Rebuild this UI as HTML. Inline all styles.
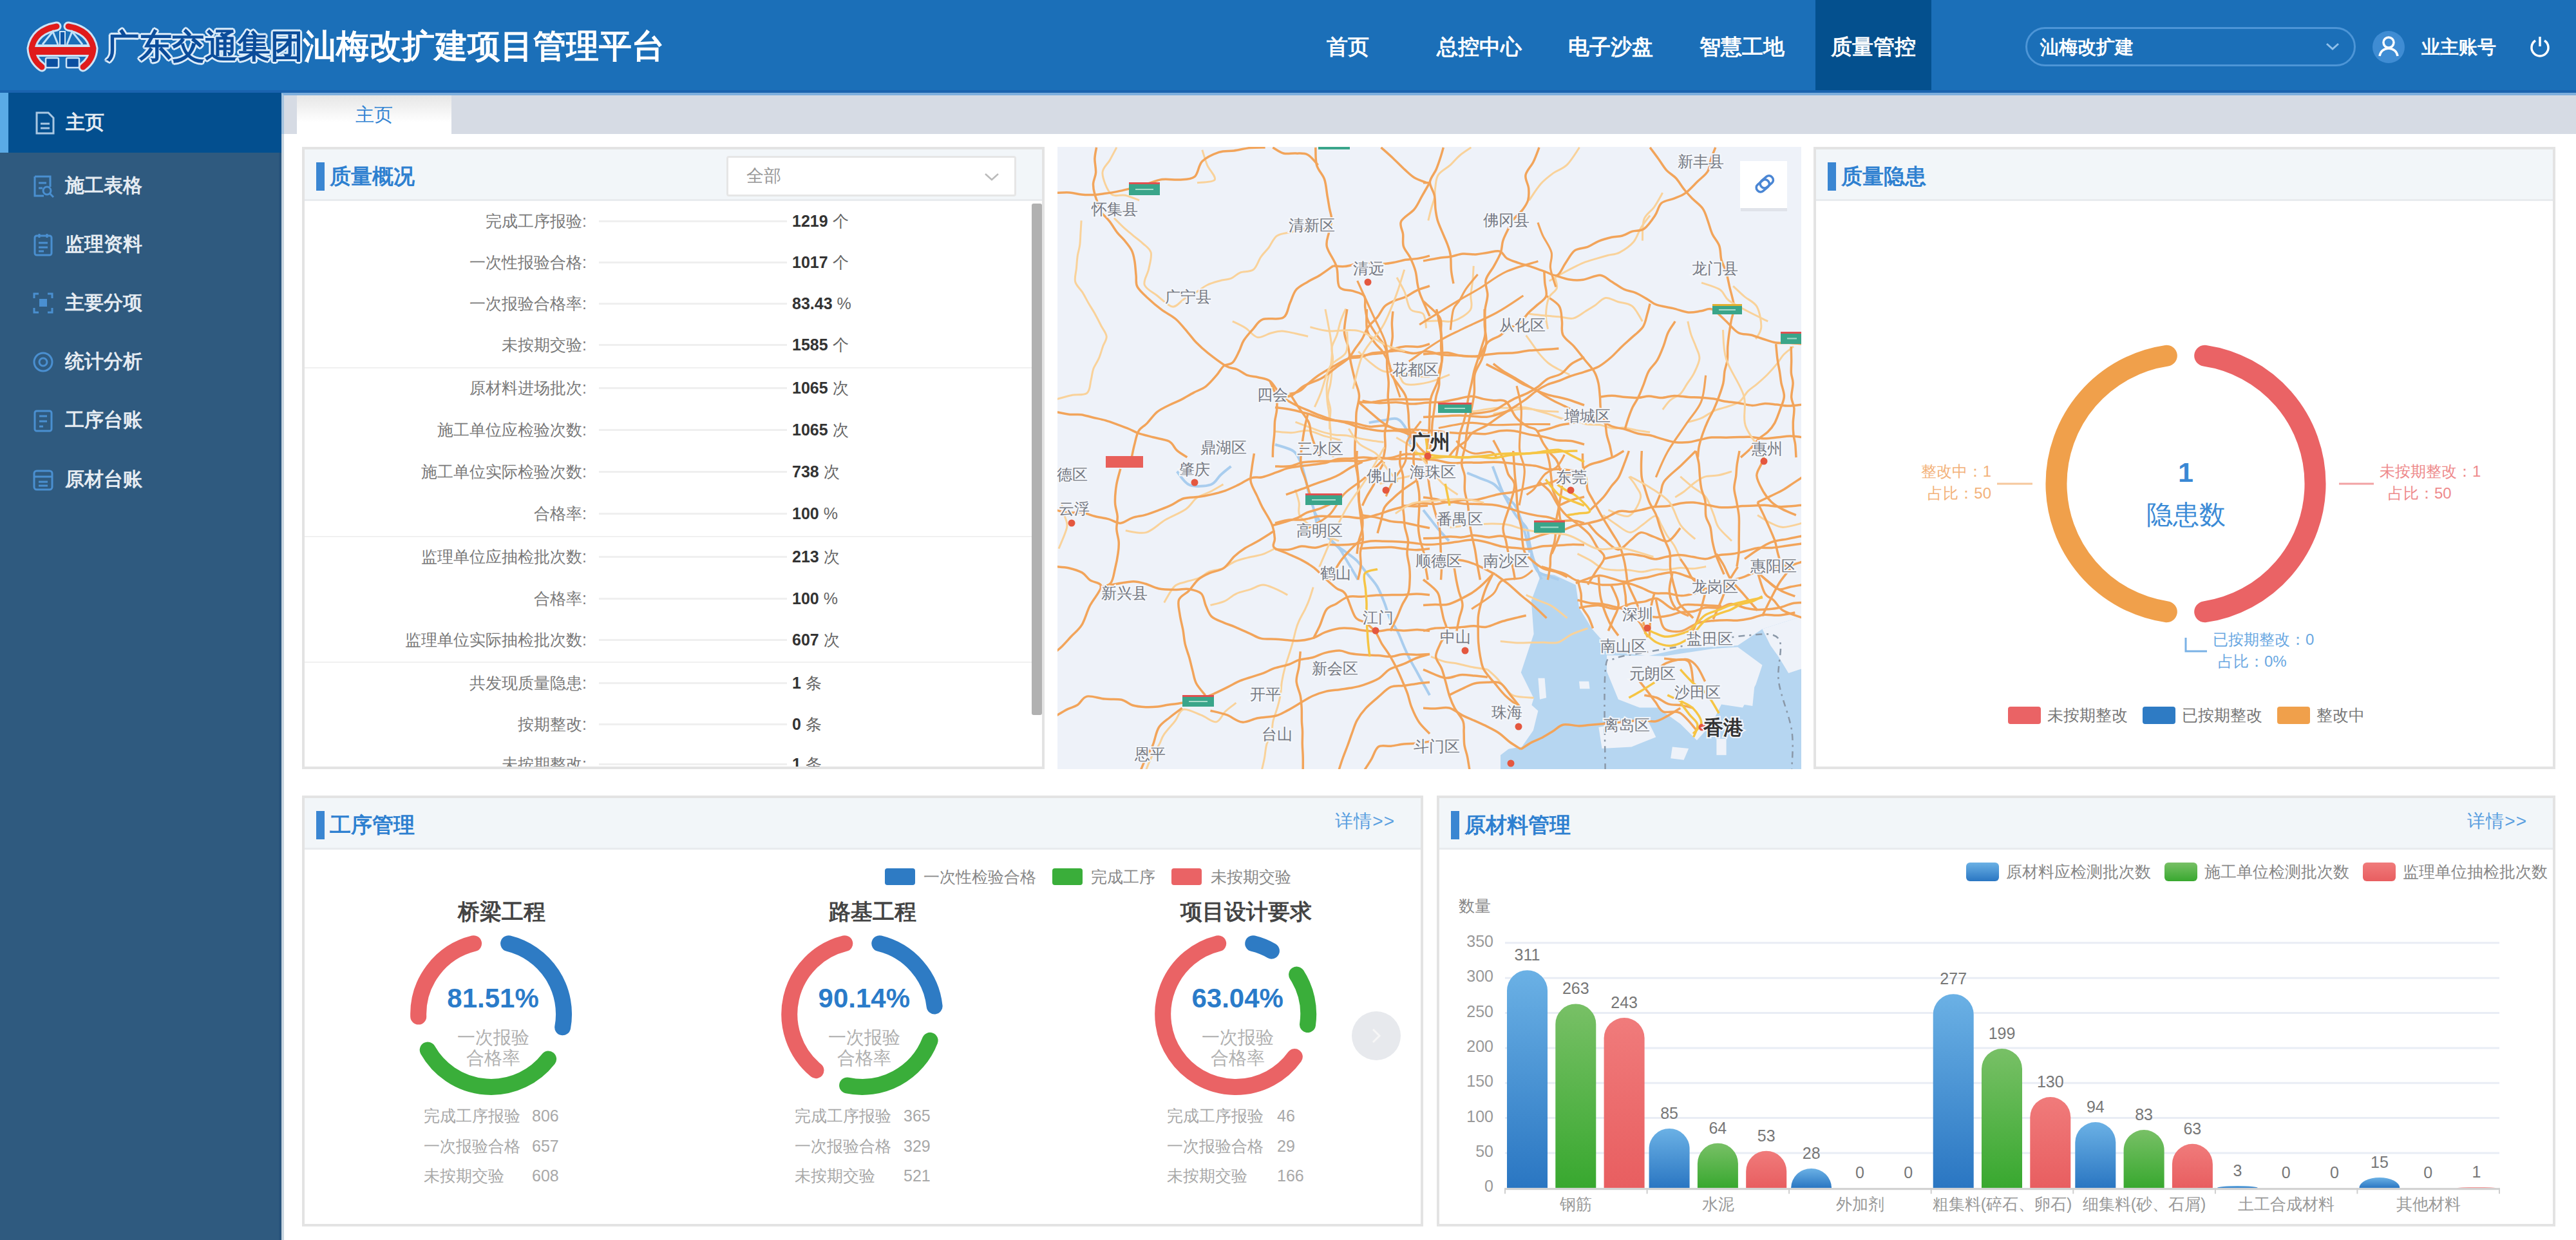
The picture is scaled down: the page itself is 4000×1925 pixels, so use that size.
<!DOCTYPE html>
<html><head><meta charset="utf-8">
<style>
*{box-sizing:border-box;margin:0;padding:0}
html,body{width:4000px;height:1925px;overflow:hidden;background:#fff;font-family:"Liberation Sans",sans-serif}
.a{position:absolute}
#hdr{left:0;top:0;width:4000px;height:144px;background:#1b6fb8;border-bottom:4px solid #1a63ae}
.nav{top:0;height:140px;line-height:146px;color:#fff;font-size:33px;font-weight:bold;text-align:center;white-space:nowrap}
#side{left:0;top:144px;width:437px;height:1781px;background:#2f5a7f;border-right:4px solid #28537b}
.si{left:0;width:433px;height:92px;color:#e6ecf2;font-size:30px;line-height:92px;white-space:nowrap;font-weight:bold}
.si .t{position:absolute;left:101px;top:0}
.si svg{position:absolute;left:50px;top:28px}
#tabbar{left:437px;top:144px;width:3563px;height:64px;background:#d6dbe4;border-top:4px solid #7eaedc;border-left:4px solid #a6c3de}
.panel{border:4px solid #e3e3e3;background:#fff;overflow:hidden}
.ph{position:absolute;left:0;top:0;right:0;height:80px;background:#f2f6f9;border-bottom:3px solid #e8ebee}
.pt{position:absolute;left:18px;top:20px;height:44px;border-left:13px solid #3a86d2;padding-left:8px;color:#2e80d0;font-size:33px;font-weight:bold;line-height:44px;white-space:nowrap}
.more{position:absolute;right:40px;top:14px;color:#5a9fe0;font-size:28px;line-height:44px;letter-spacing:1px}
.row{position:absolute;left:0;width:1100px;height:40px;font-size:25px;line-height:40px;white-space:nowrap}
.row .l{position:absolute;right:662px;color:#7a7a7a;text-align:right;font-size:25px}
.row .d{position:absolute;left:457px;width:292px;top:19px;border-top:3px solid #efefef}
.row .v{position:absolute;left:757px;color:#333;font-weight:bold;font-size:25px}.row .v i{font-style:normal;font-weight:normal;color:#666}
.sep{position:absolute;left:0;width:1130px;border-top:2px solid #f0f0f0}
</style></head>
<body>
<!-- HEADER -->
<div id="hdr" class="a">
  <svg class="a" style="left:38px;top:33px" width="118" height="80" viewBox="0 0 118 80">
    <path d="M50 8 Q16 14 11 42 Q12 60 27 71 M68 8 Q102 14 107 42 Q106 60 91 71" fill="none" stroke="#cde4f7" stroke-width="15" stroke-linecap="round"/>
    <rect x="6" y="36" width="106" height="19" rx="5" fill="#cde4f7"/>
    <path d="M50 8 Q16 14 11 42 Q12 60 27 71 M68 8 Q102 14 107 42 Q106 60 91 71" fill="none" stroke="#e01b1b" stroke-width="9" stroke-linecap="round"/>
    <rect x="10" y="40" width="98" height="12" fill="#e01b1b"/>
    <path d="M28 36 L44 16 L52 36 M66 36 L74 16 L90 36" fill="none" stroke="#bfe0f8" stroke-width="3"/>
    <rect x="54" y="15" width="10" height="21" fill="#cfe3f4"/>
    <rect x="56" y="17" width="6" height="19" fill="#0c56a8"/>
    <rect x="33" y="57" width="20" height="15" rx="2" fill="#0a4fa0" stroke="#cde4f7" stroke-width="2.5"/>
    <rect x="65" y="57" width="20" height="15" rx="2" fill="#0a4fa0" stroke="#cde4f7" stroke-width="2.5"/>
  </svg>
  <div class="a" style="left:165px;top:40px;font-size:51px;font-weight:bold;line-height:64px;white-space:nowrap;letter-spacing:0px"><span style="color:#0b4c9a;text-shadow:3px 0 #dcecf9,-3px 0 #dcecf9,0 3px #dcecf9,0 -3px #dcecf9,2px 2px #dcecf9,-2px -2px #dcecf9,2px -2px #dcecf9,-2px 2px #dcecf9">广东交通集团</span><span style="color:#fff">汕梅改扩建项目管理平台</span></div>
  <div class="a nav" style="left:1991px;width:204px">首页</div>
  <div class="a nav" style="left:2195px;width:204px">总控中心</div>
  <div class="a nav" style="left:2399px;width:204px">电子沙盘</div>
  <div class="a nav" style="left:2603px;width:204px">智慧工地</div>
  <div class="a" style="left:2819px;top:0;width:180px;height:140px;background:#04508e"></div>
  <div class="a nav" style="left:2807px;width:204px">质量管控</div>
  <div class="a" style="left:3145px;top:42px;width:513px;height:61px;border:3px solid #4d95d6;border-radius:31px"></div>
  <div class="a" style="left:3168px;top:52px;color:#fff;font-size:29px;line-height:42px;font-weight:bold">汕梅改扩建</div>
  <svg class="a" style="left:3610px;top:64px" width="24" height="16" viewBox="0 0 24 16"><path d="M3 4 L12 12 L21 4" fill="none" stroke="#8fc0ea" stroke-width="3"/></svg>
  <svg class="a" style="left:3683px;top:47px" width="52" height="52" viewBox="0 0 52 52">
    <circle cx="26" cy="26" r="25" fill="#3f8cd3"/>
    <circle cx="26" cy="19" r="8" fill="none" stroke="#fff" stroke-width="3.5"/>
    <path d="M12 40 Q14 29 26 28 Q38 29 40 40" fill="none" stroke="#fff" stroke-width="3.5"/>
  </svg>
  <div class="a" style="left:3760px;top:52px;color:#fff;font-size:29px;line-height:42px;font-weight:bold">业主账号</div>
  <svg class="a" style="left:3925px;top:54px" width="38" height="38" viewBox="0 0 38 38">
    <path d="M12 9 A13 13 0 1 0 26 9" fill="none" stroke="#fff" stroke-width="3.5"/>
    <line x1="19" y1="3" x2="19" y2="18" stroke="#fff" stroke-width="3.5"/>
  </svg>
</div>

<!-- SIDEBAR -->
<div id="side" class="a">
  <div class="a si" style="top:0;width:437px;background:#034f8f;height:93px;border-left:13px solid #5aaae6">
    <svg width="34" height="38" viewBox="0 0 34 38" style="left:40px"><path d="M4 3 H22 L30 11 V35 H4 Z" fill="none" stroke="#a9c7e2" stroke-width="3"/><line x1="10" y1="20" x2="24" y2="20" stroke="#a9c7e2" stroke-width="3"/><line x1="10" y1="27" x2="24" y2="27" stroke="#a9c7e2" stroke-width="3"/></svg>
    <span class="t" style="left:89px">主页</span>
  </div>
  <div class="a si" style="top:98px"><svg width="34" height="38" viewBox="0 0 34 38"><path d="M4 4 H28 V20 M4 4 V34 H18" fill="none" stroke="#4a8fd0" stroke-width="3"/><path d="M10 14 H22 M10 22 H16" stroke="#4a8fd0" stroke-width="3"/><circle cx="23" cy="26" r="6" fill="none" stroke="#4a8fd0" stroke-width="3"/><path d="M27 30 L33 36" stroke="#4a8fd0" stroke-width="3"/></svg><span class="t">施工表格</span></div>
  <div class="a si" style="top:189px"><svg width="34" height="38" viewBox="0 0 34 38"><rect x="4" y="5" width="26" height="30" rx="3" fill="none" stroke="#4a8fd0" stroke-width="3"/><path d="M11 2 V8 M23 2 V8 M10 16 H24 M10 23 H24 M10 29 H18" stroke="#4a8fd0" stroke-width="3"/></svg><span class="t">监理资料</span></div>
  <div class="a si" style="top:280px"><svg width="34" height="38" viewBox="0 0 34 38"><path d="M3 11 V4 H10 M24 4 H31 V11 M31 26 V33 H24 M10 33 H3 V26" fill="none" stroke="#4a8fd0" stroke-width="3"/><rect x="11" y="12" width="12" height="12" fill="#4a8fd0"/></svg><span class="t">主要分项</span></div>
  <div class="a si" style="top:371px"><svg width="34" height="38" viewBox="0 0 34 38"><circle cx="17" cy="19" r="14" fill="none" stroke="#4a8fd0" stroke-width="3"/><circle cx="17" cy="19" r="6" fill="none" stroke="#4a8fd0" stroke-width="3"/></svg><span class="t">统计分析</span></div>
  <div class="a si" style="top:462px"><svg width="34" height="38" viewBox="0 0 34 38"><rect x="4" y="4" width="26" height="31" rx="3" fill="none" stroke="#4a8fd0" stroke-width="3"/><path d="M11 12 H23 M11 20 H23 M11 28 H17" stroke="#4a8fd0" stroke-width="3"/></svg><span class="t">工序台账</span></div>
  <div class="a si" style="top:554px"><svg width="34" height="38" viewBox="0 0 34 38"><rect x="3" y="5" width="28" height="29" rx="4" fill="none" stroke="#4a8fd0" stroke-width="3"/><path d="M3 14 H31 M10 22 H24 M10 28 H24" stroke="#4a8fd0" stroke-width="3"/></svg><span class="t">原材台账</span></div>
</div>

<div class="a" style="left:437px;top:144px;width:4px;height:1781px;background:#c8d5e0"></div>
<!-- TAB BAR -->
<div id="tabbar" class="a">
  <div class="a" style="left:20px;top:0;width:240px;height:60px;background:linear-gradient(#e6e6e6,#fff 70%);color:#3585d3;font-size:29px;line-height:60px;text-align:center">主页</div>
</div>

<!-- PANEL 1 -->
<div class="a panel" style="left:469px;top:228px;width:1153px;height:966px">
  <div class="ph"><div class="pt">质量概况</div>
    <div class="a" style="left:655px;top:10px;width:450px;height:63px;background:#fff;border:3px solid #e6e6e6;border-radius:4px;color:#999;font-size:27px;line-height:57px;padding-left:28px">全部</div>
    <svg class="a" style="left:1055px;top:36px" width="24" height="14" viewBox="0 0 24 14"><path d="M2 2 L12 11 L22 2" fill="none" stroke="#bbb" stroke-width="2.5"/></svg>
  </div>
  <div class="row" style="top:91px"><span class="l">完成工序报验:</span><span class="d"></span><span class="v">1219 <i>个</i></span></div>
  <div class="row" style="top:155px"><span class="l">一次性报验合格:</span><span class="d"></span><span class="v">1017 <i>个</i></span></div>
  <div class="row" style="top:219px"><span class="l">一次报验合格率:</span><span class="d"></span><span class="v">83.43 <i>%</i></span></div>
  <div class="row" style="top:283px"><span class="l">未按期交验:</span><span class="d"></span><span class="v">1585 <i>个</i></span></div>
  <div class="row" style="top:350px"><span class="l">原材料进场批次:</span><span class="d"></span><span class="v">1065 <i>次</i></span></div>
  <div class="row" style="top:415px"><span class="l">施工单位应检验次数:</span><span class="d"></span><span class="v">1065 <i>次</i></span></div>
  <div class="row" style="top:480px"><span class="l">施工单位实际检验次数:</span><span class="d"></span><span class="v">738 <i>次</i></span></div>
  <div class="row" style="top:545px"><span class="l">合格率:</span><span class="d"></span><span class="v">100 <i>%</i></span></div>
  <div class="row" style="top:612px"><span class="l">监理单位应抽检批次数:</span><span class="d"></span><span class="v">213 <i>次</i></span></div>
  <div class="row" style="top:677px"><span class="l">合格率:</span><span class="d"></span><span class="v">100 <i>%</i></span></div>
  <div class="row" style="top:741px"><span class="l">监理单位实际抽检批次数:</span><span class="d"></span><span class="v">607 <i>次</i></span></div>
  <div class="row" style="top:808px"><span class="l">共发现质量隐患:</span><span class="d"></span><span class="v">1 <i>条</i></span></div>
  <div class="row" style="top:872px"><span class="l">按期整改:</span><span class="d"></span><span class="v">0 <i>条</i></span></div>
  <div class="row" style="top:934px"><span class="l">未按期整改:</span><span class="d"></span><span class="v">1 <i>条</i></span></div>
  <div class="sep" style="top:338px"></div>
  <div class="sep" style="top:600px"></div>
  <div class="sep" style="top:795px"></div>
  <div class="a" style="left:1129px;top:84px;width:16px;height:794px;background:#b1b1b1;border-radius:3px"></div>
</div>

<!-- PANEL 2: map -->
<div id="map" class="a" style="left:1642px;top:228px;width:1155px;height:966px;background:#eef2f9;overflow:hidden"></div>

<!-- PANEL 3 -->
<div class="a panel" style="left:2816px;top:228px;width:1152px;height:966px">
  <div class="ph"><div class="pt">质量隐患</div></div>
</div>

<!-- PANEL 4 -->
<div class="a panel" style="left:469px;top:1235px;width:1741px;height:669px">
  <div class="ph"><div class="pt">工序管理</div><div class="more">详情&gt;&gt;</div></div>
</div>

<!-- PANEL 5 -->
<div class="a panel" style="left:2231px;top:1235px;width:1737px;height:669px">
  <div class="ph"><div class="pt">原材料管理</div><div class="more">详情&gt;&gt;</div></div>
</div>

<svg class="a" style="left:1642px;top:228px" width="1155" height="966" viewBox="1642 228 1155 966" font-family="Liberation Sans, sans-serif"><rect x="1642" y="228" width="1155" height="966" fill="#eef2f9"/><path d="M2393.5 890.2 L2413.8 892.7 L2446.9 907.9 L2452.0 943.5 L2472.3 976.5 L2492.6 999.4 L2507.8 1012.1 L2558.7 1018.5 L2609.5 1007.0 L2698.4 1002.0 L2736.5 976.5 L2800.0 956.2 L2800.0 1195.0 L2330.0 1195.0 L2330.0 1172.2 L2361.8 1148.0 L2381.6 1084.0 L2361.8 1043.9 L2381.6 984.2 L2377.8 932.6 Z" fill="#b6d6f1"/><path d="M2495.1 1017.2 L2584.1 1018.5 L2660.3 1007.0 L2698.4 1004.5 L2736.5 1032.4 L2726.3 1062.9 L2706.0 1098.5 L2673.0 1093.4 L2657.7 1123.9 L2634.9 1149.3 L2609.5 1123.9 L2573.9 1098.5 L2546.0 1098.5 L2512.9 1085.8 L2495.1 1042.6 Z" fill="#eef2f9"/><path d="M2482.4 1129.0 L2523.1 1121.4 L2558.7 1118.8 L2571.4 1144.2 L2533.3 1159.5 L2487.5 1162.0 Z" fill="#eef2f9"/><path d="M2330.0 1083.3 L2365.6 1083.3 L2388.4 1103.6 L2380.8 1134.1 L2363.0 1159.5 L2330.0 1164.6 Z" fill="#eef2f9"/><path d="M2736.5 976.5 L2800.0 956.2 L2800.0 1037.5 L2777.2 1045.1 L2761.9 1019.7 L2749.2 1002.0 Z" fill="#eef2f9"/><path d="M2452.0 1057.8 L2467.2 1057.8 L2468.5 1069.3 L2453.2 1069.3 Z" fill="#eef2f9"/><path d="M2388.4 1052.8 L2398.6 1052.8 L2401.1 1083.3 L2391.0 1085.8 Z" fill="#eef2f9"/><path d="M2665.4 1146.8 L2680.6 1146.8 L2680.6 1172.2 L2665.4 1172.2 Z" fill="#eef2f9"/><path d="M2685.7 1045.1 L2726.3 1045.1 L2721.3 1096.0 L2690.8 1090.9 Z" fill="#eef2f9"/><path d="M2596.8 1159.5 L2622.2 1162.0 L2614.6 1179.8 L2594.2 1177.3 Z" fill="#eef2f9"/><path d="M2492.6 1195.0 C2492.6 1169.6 2490.1 1071.4 2492.6 1042.6 C2495.1 1013.8 2496.8 1027.4 2507.8 1022.3 C2518.9 1017.2 2537.5 1015.9 2558.7 1012.1 C2579.8 1008.3 2609.5 1003.6 2634.9 999.4 C2660.3 995.2 2689.9 988.0 2711.1 986.7 C2732.3 985.4 2753.4 979.9 2761.9 991.8 C2770.4 1003.6 2758.5 1034.1 2761.9 1057.8 C2765.3 1081.6 2778.8 1111.2 2782.2 1134.1 C2785.6 1156.9 2782.2 1184.9 2782.2 1195.0" fill="none" stroke="#8a98a8" stroke-width="2.5" stroke-dasharray="10 7 3 7"/><path d="M2039.2 791.8 C2040.8 794.5 2045.4 802.5 2048.7 808.1 C2052.0 813.7 2055.5 819.7 2059.1 825.5 C2062.8 831.4 2065.5 837.9 2070.6 843.1 C2075.7 848.4 2083.8 852.5 2089.9 857.1 C2096.0 861.6 2101.6 865.2 2107.1 870.7 C2112.5 876.2 2117.4 883.6 2122.6 890.2 C2127.8 896.7 2133.7 902.5 2138.3 910.1 C2142.8 917.7 2146.4 927.5 2149.7 935.7 C2153.0 943.9 2154.6 952.0 2158.0 959.4 C2161.5 966.8 2166.6 973.0 2170.2 980.3 C2173.9 987.6 2176.7 996.0 2179.9 1003.2 C2183.0 1010.4 2186.0 1017.0 2189.2 1023.4 C2192.4 1029.7 2195.6 1034.9 2199.2 1041.3 C2202.7 1047.7 2206.8 1055.4 2210.3 1061.7 C2213.8 1068.0 2218.4 1076.3 2220.0 1079.2" fill="none" stroke="#a9cdee" stroke-width="4"/><path d="M1827.6 731.9 C1830.9 735.4 1838.4 749.5 1847.1 752.9 C1855.9 756.3 1872.1 754.9 1880.1 752.3 C1888.2 749.7 1890.0 742.2 1895.2 737.5 C1900.4 732.7 1908.7 726.2 1911.5 724.0" fill="none" stroke="#a9cdee" stroke-width="4"/><path d="M2317.8 724.0 C2318.9 726.9 2322.0 735.1 2324.4 741.5 C2326.9 747.8 2329.7 755.7 2332.5 761.9 C2335.2 768.2 2337.3 772.3 2341.0 778.8 C2344.7 785.3 2349.5 793.9 2354.5 800.8 C2359.4 807.7 2367.4 813.3 2370.8 820.3 C2374.2 827.3 2373.3 835.1 2375.0 842.9 C2376.7 850.8 2377.9 858.1 2381.0 867.5 C2384.1 877.0 2391.5 894.3 2393.6 899.6" fill="none" stroke="#a9cdee" stroke-width="4"/><path d="M2210.0 791.8 C2211.8 794.1 2217.1 800.7 2220.9 805.6 C2224.8 810.5 2228.4 815.5 2233.2 821.1 C2238.1 826.8 2247.1 836.6 2249.9 839.7" fill="none" stroke="#a9cdee" stroke-width="4"/><path d="M1980.0 690.0 C1984.8 691.7 2001.9 695.6 2008.5 700.3 C2015.2 705.1 2016.8 711.6 2019.9 718.5 C2022.9 725.5 2024.7 733.9 2026.9 742.1 C2029.0 750.3 2030.4 759.0 2032.7 767.6 C2035.0 776.1 2038.5 784.8 2040.9 793.4 C2043.3 801.9 2043.1 811.8 2046.9 818.8 C2050.6 825.7 2057.6 829.4 2063.2 835.0 C2068.8 840.6 2076.0 847.0 2080.4 852.3 C2084.7 857.7 2086.2 861.8 2089.3 867.0 C2092.4 872.2 2095.9 877.9 2099.1 883.4 C2102.3 889.0 2107.1 897.3 2108.7 900.1" fill="none" stroke="#a9cdee" stroke-width="4"/><path d="M2278.1 734.1 C2281.5 735.5 2291.8 739.7 2298.7 742.6 C2305.6 745.5 2313.2 747.1 2319.5 751.5 C2325.8 755.9 2330.9 763.6 2336.3 769.1 C2341.8 774.6 2347.9 777.7 2352.3 784.4 C2356.7 791.0 2359.6 800.6 2362.6 809.2 C2365.5 817.9 2367.9 827.3 2370.2 836.1 C2372.6 844.9 2373.8 853.6 2376.7 862.1 C2379.6 870.6 2383.1 881.5 2387.7 886.9 C2392.3 892.2 2398.7 892.0 2404.1 894.2 C2409.6 896.4 2417.7 899.1 2420.4 900.1" fill="none" stroke="#a9cdee" stroke-width="4"/><path d="M2125.7 656.2 C2129.2 655.6 2139.3 653.8 2146.6 652.8 C2153.9 651.9 2163.5 648.0 2169.7 650.4 C2176.0 652.8 2180.8 660.7 2184.2 667.3 C2187.6 673.9 2189.1 686.2 2190.0 690.0" fill="none" stroke="#a9cdee" stroke-width="4"/><path d="M1679.1 342.3 C1678.9 345.7 1678.3 356.3 1677.9 362.7 C1677.5 369.1 1677.5 375.0 1676.7 380.6 C1676.0 386.3 1674.2 390.7 1673.3 396.8 C1672.4 402.8 1672.0 410.1 1671.4 416.9 C1670.8 423.6 1668.1 431.4 1669.7 437.5 C1671.3 443.7 1677.4 448.3 1680.9 453.9 C1684.4 459.5 1687.5 466.0 1690.6 471.3 C1693.6 476.6 1696.2 480.0 1699.4 485.8 C1702.6 491.6 1706.9 499.9 1710.0 506.0 C1713.2 512.1 1717.8 517.1 1718.2 522.4 C1718.7 527.6 1714.5 532.1 1712.6 537.7 C1710.7 543.2 1709.1 549.8 1706.6 555.6 C1704.2 561.5 1699.8 567.2 1697.7 572.9 C1695.7 578.6 1695.7 583.7 1694.1 589.9 C1692.5 596.1 1693.0 606.2 1687.9 610.2 C1682.8 614.1 1671.4 612.0 1663.4 613.7 C1655.5 615.3 1643.9 618.9 1640.0 620.0" fill="none" stroke="#f9d29a" stroke-width="3"/><path d="M1729.9 338.4 C1732.4 340.8 1739.5 348.2 1744.5 352.8 C1749.6 357.5 1755.4 362.1 1760.3 366.3 C1765.3 370.4 1770.0 373.5 1774.5 377.8 C1779.0 382.1 1785.7 385.5 1787.2 392.2 C1788.7 398.9 1785.4 409.5 1783.7 417.8 C1782.0 426.1 1775.0 435.2 1777.2 442.1 C1779.3 448.9 1789.4 453.1 1796.6 458.7 C1803.9 464.4 1813.5 475.2 1820.6 476.1 C1827.6 476.9 1832.9 467.7 1838.9 464.0 C1844.8 460.4 1850.5 457.9 1856.5 454.3 C1862.4 450.7 1868.3 445.5 1874.5 442.5 C1880.7 439.4 1887.6 437.7 1893.8 436.0 C1900.0 434.2 1906.5 434.2 1911.8 432.1 C1917.0 430.0 1919.8 425.6 1925.5 423.3 C1931.3 421.1 1940.9 422.6 1946.3 418.5 C1951.7 414.4 1953.9 404.4 1957.9 398.8 C1961.8 393.1 1965.8 390.0 1970.0 384.5 C1974.1 379.1 1977.0 370.2 1983.0 366.1 C1989.0 362.0 1997.9 362.3 2006.2 360.0 C2014.5 357.8 2024.8 355.5 2032.9 352.6 C2041.0 349.6 2050.9 344.0 2054.5 342.3" fill="none" stroke="#f9d29a" stroke-width="3"/><path d="M1733.9 228.9 C1732.1 232.2 1727.1 241.8 1723.4 248.5 C1719.8 255.2 1711.7 260.1 1711.9 268.8 C1712.2 277.6 1719.0 295.2 1725.0 300.9 C1730.9 306.6 1740.1 301.6 1747.5 303.3 C1754.8 305.0 1765.5 309.7 1769.1 311.0" fill="none" stroke="#f9d29a" stroke-width="3"/><path d="M1866.8 232.8 C1868.1 236.7 1871.4 248.6 1874.6 256.3 C1877.8 263.9 1888.8 274.4 1886.2 279.0 C1883.6 283.5 1863.5 282.9 1859.0 283.7" fill="none" stroke="#f9d29a" stroke-width="3"/><path d="M2089.7 479.2 C2088.4 482.4 2084.1 491.4 2081.8 498.1 C2079.5 504.9 2078.2 512.9 2076.0 519.7 C2073.7 526.5 2069.3 532.8 2068.2 538.9 C2067.1 544.9 2069.6 549.4 2069.6 555.9 C2069.6 562.4 2068.6 571.2 2068.0 577.8 C2067.4 584.5 2067.0 589.4 2065.9 595.7 C2064.9 602.0 2061.9 609.1 2061.9 615.7 C2061.9 622.2 2065.4 628.9 2065.9 635.2 C2066.4 641.5 2064.9 647.4 2064.9 653.3 C2065.0 659.2 2065.8 664.1 2066.2 670.6 C2066.5 677.1 2066.4 686.0 2067.0 692.5 C2067.7 699.1 2069.7 707.0 2070.2 709.9" fill="none" stroke="#f9d29a" stroke-width="3"/><path d="M2109.3 545.7 C2112.4 548.6 2121.6 558.0 2128.0 563.1 C2134.3 568.1 2140.0 573.5 2147.4 576.0 C2154.8 578.6 2164.3 577.0 2172.3 578.3 C2180.3 579.7 2187.7 582.9 2195.6 584.0 C2203.6 585.1 2215.9 584.7 2220.0 584.8" fill="none" stroke="#f9d29a" stroke-width="3"/><path d="M2011.5 655.2 C2015.0 656.5 2026.0 660.5 2032.6 663.0 C2039.2 665.4 2044.6 667.9 2051.2 669.9 C2057.7 671.9 2065.4 673.9 2072.0 674.9 C2078.5 675.9 2084.2 675.0 2090.6 675.9 C2097.0 676.8 2103.7 679.0 2110.2 680.4 C2116.8 681.8 2123.5 683.1 2129.9 684.1 C2136.2 685.1 2145.3 686.1 2148.4 686.5" fill="none" stroke="#f9d29a" stroke-width="3"/><path d="M2284.3 228.9 C2281.4 231.0 2271.9 236.9 2266.5 241.5 C2261.2 246.0 2257.7 251.1 2252.1 256.1 C2246.6 261.1 2237.3 265.6 2233.4 271.3 C2229.5 277.1 2229.7 284.7 2228.8 290.5 C2227.8 296.3 2228.6 300.6 2227.6 306.2 C2226.5 311.8 2224.0 317.9 2222.4 324.0 C2220.7 330.0 2218.6 339.3 2217.8 342.4" fill="none" stroke="#f9d29a" stroke-width="3"/><path d="M2452.6 228.9 C2449.3 233.4 2440.0 249.3 2433.2 255.9 C2426.5 262.5 2418.9 263.7 2412.1 268.6 C2405.4 273.5 2399.0 278.2 2392.7 285.3 C2386.4 292.4 2377.4 306.8 2374.3 311.1" fill="none" stroke="#f9d29a" stroke-width="3"/><path d="M2562.1 334.5 C2559.8 337.6 2552.7 346.1 2548.4 353.0 C2544.1 359.8 2541.9 369.2 2536.4 375.7 C2530.8 382.1 2521.6 388.3 2515.0 391.8 C2508.3 395.3 2502.3 394.9 2496.3 396.5 C2490.4 398.1 2485.2 399.6 2479.3 401.4 C2473.5 403.1 2467.0 404.8 2461.3 406.9 C2455.6 409.1 2450.9 411.5 2445.0 414.3 C2439.2 417.2 2432.7 420.5 2426.2 424.2 C2419.6 427.8 2409.0 434.3 2405.6 436.3" fill="none" stroke="#f9d29a" stroke-width="3"/><path d="M2374.3 487.1 C2378.2 487.6 2389.7 489.1 2397.4 489.8 C2405.2 490.6 2413.2 491.0 2420.8 491.7 C2428.4 492.4 2436.1 495.5 2443.0 494.1 C2449.9 492.6 2456.8 486.3 2462.3 483.0 C2467.8 479.8 2470.9 478.0 2476.1 474.6 C2481.2 471.2 2487.1 463.5 2493.1 462.5 C2499.2 461.5 2505.4 466.4 2512.3 468.5 C2519.2 470.6 2528.0 470.1 2534.3 475.2 C2540.7 480.2 2547.7 494.9 2550.4 498.9" fill="none" stroke="#f9d29a" stroke-width="3"/><path d="M2620.8 655.4 C2624.4 654.3 2635.4 651.9 2642.2 648.9 C2648.9 646.0 2655.5 640.5 2661.4 637.8 C2667.3 635.1 2671.1 635.0 2677.6 632.7 C2684.1 630.4 2694.6 628.2 2700.6 624.0 C2706.7 619.7 2709.5 612.0 2714.1 607.4 C2718.6 602.8 2722.9 600.7 2728.0 596.4 C2733.0 592.1 2739.1 586.8 2744.4 581.5 C2749.6 576.1 2755.4 569.6 2759.6 564.4 C2763.9 559.2 2765.6 554.7 2769.9 550.3 C2774.1 545.9 2782.6 540.0 2785.1 538.0" fill="none" stroke="#f9d29a" stroke-width="3"/><path d="M2691.2 444.1 C2694.2 446.8 2702.8 455.1 2708.9 460.5 C2715.1 465.8 2723.9 468.4 2728.2 476.3 C2732.5 484.2 2735.1 499.4 2734.8 507.7 C2734.6 516.1 2727.8 523.2 2726.4 526.3" fill="none" stroke="#f9d29a" stroke-width="3"/><path d="M2288.2 412.8 C2288.0 416.5 2287.5 427.6 2286.8 435.2 C2286.0 442.7 2284.4 450.6 2283.8 458.3 C2283.2 465.9 2287.6 474.3 2283.3 481.0 C2278.9 487.6 2266.1 495.3 2257.5 498.1 C2249.0 500.9 2239.9 497.7 2232.0 497.9 C2224.1 498.0 2213.7 498.7 2210.0 498.9" fill="none" stroke="#f9d29a" stroke-width="3"/><path d="M2581.7 299.3 C2579.5 303.1 2573.3 314.8 2568.5 321.6 C2563.7 328.5 2555.8 332.0 2552.7 340.7 C2549.7 349.3 2550.8 368.2 2550.4 373.7" fill="none" stroke="#f9d29a" stroke-width="3"/><path d="M2268.7 639.7 C2272.0 639.5 2281.9 639.2 2288.3 638.5 C2294.8 637.8 2300.8 636.4 2307.4 635.5 C2313.9 634.6 2321.3 633.4 2327.8 633.1 C2334.2 632.7 2339.4 633.4 2346.1 633.3 C2352.9 633.2 2361.4 631.7 2368.3 632.5 C2375.2 633.2 2381.6 636.0 2387.6 637.7 C2393.6 639.3 2398.0 640.5 2404.6 642.6 C2411.1 644.7 2420.5 648.5 2427.0 650.3 C2433.6 652.1 2437.8 652.1 2444.0 653.4 C2450.2 654.8 2457.7 657.6 2464.3 658.7 C2470.9 659.7 2476.9 658.6 2483.5 659.6 C2490.2 660.6 2497.7 664.2 2504.1 664.9 C2510.5 665.6 2515.6 663.4 2521.9 663.9 C2528.2 664.5 2535.2 666.9 2541.9 668.1 C2548.6 669.3 2558.7 670.5 2562.1 671.0" fill="none" stroke="#f9d29a" stroke-width="3"/><path d="M1644.0 851.7 C1646.1 846.2 1655.2 827.0 1656.7 818.6 C1658.2 810.1 1654.6 807.2 1653.2 800.8 C1651.7 794.3 1648.8 783.3 1648.0 779.8" fill="none" stroke="#f9d29a" stroke-width="3"/><path d="M1747.8 823.8 C1753.1 824.2 1769.4 829.4 1779.7 826.6 C1790.0 823.8 1799.4 813.0 1809.5 807.0 C1819.7 801.1 1832.7 796.4 1840.9 790.7 C1849.0 785.1 1852.1 777.4 1858.4 772.9 C1864.7 768.4 1871.9 767.2 1878.7 763.7 C1885.5 760.2 1896.0 753.9 1899.5 751.9" fill="none" stroke="#f9d29a" stroke-width="3"/><path d="M1807.7 935.5 C1810.3 931.3 1818.0 915.7 1823.6 910.3 C1829.2 904.9 1834.8 905.4 1841.2 903.3 C1847.5 901.1 1855.4 900.1 1861.6 897.4 C1867.7 894.7 1872.0 889.7 1878.1 887.2 C1884.2 884.7 1891.7 885.0 1898.3 882.3 C1905.0 879.7 1911.5 874.2 1918.0 871.5 C1924.6 868.7 1930.5 867.5 1937.6 865.6 C1944.8 863.8 1954.0 862.7 1961.0 860.4 C1967.9 858.1 1976.3 853.1 1979.3 851.7" fill="none" stroke="#f9d29a" stroke-width="3"/><path d="M2039.2 911.6 C2038.2 914.7 2035.2 925.0 2033.1 930.5 C2031.1 936.1 2029.6 939.2 2027.0 944.8 C2024.3 950.4 2019.4 958.8 2017.0 964.2 C2014.5 969.7 2013.9 971.8 2012.2 977.6 C2010.6 983.4 2008.8 992.1 2006.9 998.9 C2005.0 1005.8 2002.8 1012.3 2000.8 1018.7 C1998.8 1025.1 1996.7 1030.7 1995.0 1037.3 C1993.2 1044.0 1991.5 1052.0 1990.4 1058.7 C1989.3 1065.3 1989.6 1070.8 1988.6 1077.2 C1987.5 1083.5 1985.9 1090.0 1984.0 1096.9 C1982.1 1103.8 1978.7 1112.1 1977.0 1118.7 C1975.4 1125.4 1976.1 1130.3 1974.3 1136.6 C1972.6 1142.8 1968.5 1149.3 1966.7 1156.1 C1964.9 1162.9 1964.6 1170.8 1963.4 1177.3 C1962.2 1183.8 1960.0 1192.1 1959.4 1195.0" fill="none" stroke="#f9d29a" stroke-width="3"/><path d="M1779.7 1195.0 C1781.1 1191.8 1784.4 1182.4 1787.8 1175.8 C1791.2 1169.3 1796.7 1161.8 1799.9 1155.9 C1803.2 1150.0 1803.2 1146.5 1807.3 1140.4 C1811.4 1134.3 1819.6 1125.8 1824.7 1119.3 C1829.8 1112.8 1831.0 1103.0 1837.7 1101.4 C1844.5 1099.9 1856.8 1107.0 1865.2 1110.2 C1873.7 1113.4 1882.2 1121.7 1888.5 1120.8 C1894.8 1119.8 1897.7 1109.2 1902.8 1104.3 C1908.0 1099.4 1916.7 1093.4 1919.4 1091.2" fill="none" stroke="#f9d29a" stroke-width="3"/><path d="M2011.3 759.9 C2012.2 763.3 2015.9 773.5 2017.1 780.3 C2018.3 787.1 2014.7 794.2 2018.3 800.7 C2021.9 807.1 2032.0 813.8 2038.5 818.9 C2044.9 823.9 2050.4 827.3 2057.2 830.8 C2064.0 834.2 2075.5 838.2 2079.1 839.7" fill="none" stroke="#f9d29a" stroke-width="3"/><path d="M2329.8 995.4 C2334.0 995.8 2347.1 997.6 2355.4 997.9 C2363.7 998.3 2372.6 997.6 2379.4 997.5 C2386.3 997.4 2389.9 997.4 2396.6 997.3 C2403.2 997.3 2412.0 999.4 2419.4 997.2 C2426.8 995.1 2433.4 988.1 2441.1 984.4 C2448.8 980.8 2461.4 976.9 2465.5 975.4" fill="none" stroke="#f9d29a" stroke-width="3"/><path d="M2489.4 799.8 C2492.7 802.1 2502.2 809.3 2509.1 813.7 C2516.1 818.2 2524.2 826.3 2531.1 826.5 C2538.0 826.6 2543.9 819.0 2550.5 814.7 C2557.1 810.5 2565.7 800.8 2570.6 800.9 C2575.4 801.0 2576.7 810.0 2579.7 815.1 C2582.7 820.1 2585.1 825.7 2588.5 831.2 C2592.0 836.7 2596.9 841.9 2600.4 848.0 C2603.8 854.1 2607.7 864.4 2609.2 867.7" fill="none" stroke="#f9d29a" stroke-width="3"/><path d="M2601.2 771.9 C2603.7 770.3 2610.8 766.1 2616.0 762.2 C2621.1 758.4 2626.9 752.5 2632.1 748.8 C2637.4 745.1 2641.2 742.0 2647.3 740.1 C2653.3 738.3 2661.4 739.2 2668.4 737.8 C2675.3 736.5 2685.6 732.9 2689.0 731.9" fill="none" stroke="#f9d29a" stroke-width="3"/><path d="M2222.0 1019.4 C2225.6 1020.7 2237.0 1025.6 2243.5 1027.3 C2250.0 1029.0 2254.2 1028.3 2261.0 1029.7 C2267.7 1031.0 2276.1 1033.7 2284.2 1035.3 C2292.4 1036.9 2305.5 1038.7 2309.8 1039.3" fill="none" stroke="#f9d29a" stroke-width="3"/><path d="M2309.8 1039.3 C2312.2 1041.5 2319.7 1048.0 2323.9 1052.4 C2328.2 1056.8 2331.0 1061.0 2335.4 1065.6 C2339.7 1070.2 2342.5 1077.0 2350.2 1079.9 C2357.9 1082.9 2376.4 1082.7 2381.7 1083.2" fill="none" stroke="#f9d29a" stroke-width="3"/><path d="M2689.0 939.5 C2693.2 938.8 2706.0 936.9 2714.0 934.9 C2722.0 932.9 2733.1 928.8 2736.9 927.5" fill="none" stroke="#f9d29a" stroke-width="3"/><path d="M2057.9 480.0 C2058.6 483.5 2060.6 493.7 2062.0 501.1 C2063.3 508.5 2065.0 516.6 2066.1 524.3 C2067.1 532.0 2068.4 539.3 2068.3 547.2 C2068.3 555.2 2067.0 563.6 2065.6 572.0 C2064.3 580.3 2061.1 589.1 2060.3 597.5 C2059.5 606.0 2060.4 615.1 2061.0 622.7 C2061.6 630.3 2063.3 635.8 2063.9 643.0 C2064.5 650.3 2064.6 662.4 2064.7 666.3" fill="none" stroke="#f9d29a" stroke-width="3"/><path d="M1980.0 669.7 C1984.2 670.0 1996.5 671.9 2005.0 671.7 C2013.5 671.5 2022.1 667.7 2030.8 668.6 C2039.6 669.5 2049.0 674.7 2057.5 677.1 C2065.9 679.5 2077.6 682.2 2081.6 683.3" fill="none" stroke="#f9d29a" stroke-width="3"/><path d="M2156.2 571.5 C2158.7 573.2 2167.2 577.6 2171.7 581.7 C2176.2 585.9 2175.3 594.5 2183.2 596.5 C2191.0 598.4 2207.2 595.9 2218.5 593.4 C2229.8 591.0 2245.6 583.6 2251.0 581.6" fill="none" stroke="#f9d29a" stroke-width="3"/><path d="M2318.8 642.6 C2322.7 641.9 2334.1 639.7 2342.3 638.4 C2350.5 637.1 2359.0 634.7 2368.0 634.6 C2377.1 634.5 2388.1 637.1 2396.9 637.9 C2405.6 638.6 2416.5 639.0 2420.4 639.2" fill="none" stroke="#f9d29a" stroke-width="3"/><path d="M2251.0 818.8 C2255.1 818.3 2267.5 816.8 2275.3 816.0 C2283.1 815.2 2290.6 814.5 2297.6 814.0 C2304.7 813.6 2310.2 812.9 2317.8 813.1 C2325.4 813.2 2335.4 813.5 2343.1 814.9 C2350.9 816.3 2357.1 819.7 2364.3 821.5 C2371.5 823.3 2382.8 824.9 2386.5 825.5" fill="none" stroke="#f9d29a" stroke-width="3"/><path d="M2142.6 751.0 C2146.9 749.8 2159.5 746.0 2168.6 743.7 C2177.6 741.4 2192.1 738.5 2196.8 737.5" fill="none" stroke="#f9d29a" stroke-width="3"/><path d="M2369.6 520.7 C2371.2 522.9 2375.8 529.2 2379.4 534.1 C2383.0 539.1 2387.1 545.5 2391.2 550.4 C2395.3 555.3 2399.5 559.8 2404.0 563.5 C2408.6 567.2 2412.9 569.4 2418.4 572.5 C2424.0 575.5 2434.2 580.1 2437.3 581.6" fill="none" stroke="#f9d29a" stroke-width="3"/><path d="M2449.5 859.7 C2453.0 861.5 2463.7 866.6 2470.2 870.4 C2476.7 874.2 2482.0 880.0 2488.7 882.4 C2495.4 884.9 2504.1 884.8 2510.6 885.2 C2517.1 885.5 2521.2 884.3 2527.6 884.7 C2534.0 885.1 2541.9 887.9 2548.9 887.8 C2555.9 887.7 2563.3 884.6 2569.8 884.0 C2576.3 883.4 2581.4 884.8 2587.9 884.4 C2594.4 884.0 2602.1 881.7 2608.8 881.4 C2615.6 881.2 2621.7 883.1 2628.4 882.8 C2635.1 882.5 2645.7 880.2 2649.1 879.6" fill="none" stroke="#f9d29a" stroke-width="3"/><path d="M2609.2 739.9 C2612.4 742.6 2621.9 750.9 2628.4 756.2 C2635.0 761.4 2643.2 764.6 2648.6 771.5 C2653.9 778.5 2657.2 790.0 2660.6 797.8 C2663.9 805.6 2663.8 811.6 2668.5 818.5 C2673.3 825.5 2685.6 836.2 2689.0 839.7" fill="none" stroke="#f9d29a" stroke-width="3"/><path d="M2529.4 739.9 C2531.2 742.4 2537.3 749.1 2540.3 754.7 C2543.3 760.3 2549.2 765.7 2547.3 773.5 C2545.5 781.2 2537.4 798.0 2529.1 801.1 C2520.7 804.1 2502.7 793.4 2497.4 791.8" fill="none" stroke="#f9d29a" stroke-width="3"/><path d="M2729.0 799.8 C2732.2 801.7 2741.9 808.2 2748.5 811.3 C2755.2 814.4 2760.1 818.3 2768.7 818.4 C2777.3 818.5 2794.8 812.9 2800.0 811.8" fill="none" stroke="#f9d29a" stroke-width="3"/><path d="M2369.7 923.6 C2372.7 924.9 2381.0 928.8 2387.7 931.7 C2394.4 934.7 2402.5 936.5 2410.2 941.2 C2417.8 945.8 2429.7 956.4 2433.6 959.5" fill="none" stroke="#f9d29a" stroke-width="3"/><path d="M2620.8 498.9 C2621.6 502.2 2623.6 512.4 2625.7 518.9 C2627.8 525.4 2631.1 531.7 2633.3 538.0 C2635.5 544.3 2639.4 549.9 2638.9 556.7 C2638.5 563.5 2633.9 572.2 2630.7 578.8 C2627.4 585.5 2622.8 591.2 2619.2 596.6 C2615.6 602.1 2613.3 607.5 2609.0 611.6 C2604.7 615.7 2598.1 617.2 2593.5 621.3 C2589.0 625.3 2583.6 633.4 2581.7 635.8" fill="none" stroke="#f9d29a" stroke-width="3"/><path d="M1879.5 939.5 C1883.1 938.5 1894.6 936.4 1901.3 933.4 C1907.9 930.5 1912.7 924.8 1919.4 921.8 C1926.0 918.7 1934.2 917.4 1941.1 915.1 C1948.0 912.8 1954.4 908.2 1961.0 908.1 C1967.6 907.9 1974.2 911.6 1980.6 914.2 C1987.0 916.8 1996.2 922.0 1999.3 923.6" fill="none" stroke="#f9d29a" stroke-width="3"/><path d="M1913.8 498.8 C1917.2 500.5 1928.0 505.2 1934.5 509.4 C1940.9 513.5 1945.9 522.3 1952.5 523.6 C1959.0 524.9 1967.3 518.6 1973.7 517.0 C1980.1 515.4 1984.5 513.9 1990.8 514.0 C1997.2 514.1 2004.9 516.5 2011.6 517.8 C2018.3 519.2 2027.8 521.5 2031.1 522.2" fill="none" stroke="#f9d29a" stroke-width="3"/><path d="M1702.6 228.9 C1702.1 231.8 1700.1 239.9 1699.9 246.4 C1699.8 252.9 1702.0 261.4 1701.6 267.8 C1701.2 274.2 1697.9 279.4 1697.6 284.9 C1697.3 290.5 1697.7 293.6 1699.8 301.2 C1701.9 308.8 1708.6 325.7 1710.4 330.6" fill="none" stroke="#f2a45a" stroke-width="3.5"/><path d="M1640.0 299.3 C1643.5 299.2 1654.5 298.5 1661.0 298.9 C1667.6 299.4 1673.2 301.6 1679.5 302.1 C1685.9 302.7 1693.1 302.7 1699.2 302.4 C1705.4 302.1 1710.6 301.1 1716.6 300.3 C1722.5 299.5 1728.7 298.6 1734.8 297.4 C1740.9 296.2 1746.2 294.9 1753.2 293.2 C1760.2 291.5 1768.2 289.5 1776.7 287.1 C1785.2 284.7 1795.2 279.9 1804.2 278.6 C1813.2 277.2 1822.4 279.7 1830.8 279.0 C1839.3 278.3 1848.9 279.2 1854.9 274.4 C1860.9 269.7 1860.4 257.0 1866.7 250.6 C1873.0 244.3 1884.4 239.2 1892.6 236.4 C1900.8 233.6 1907.8 235.0 1915.9 233.9 C1924.0 232.7 1933.1 230.3 1941.2 229.5 C1949.3 228.7 1960.7 229.0 1964.6 228.9" fill="none" stroke="#f2a45a" stroke-width="3.5"/><path d="M1710.4 330.6 C1712.5 332.7 1718.6 338.3 1722.7 343.4 C1726.8 348.5 1731.1 356.3 1734.9 361.1 C1738.7 366.0 1741.9 368.0 1745.6 372.6 C1749.4 377.2 1754.6 383.2 1757.3 388.7 C1760.1 394.3 1760.8 399.4 1761.9 405.9 C1763.0 412.4 1763.4 421.4 1764.1 427.9 C1764.8 434.5 1763.0 439.4 1766.2 445.4 C1769.4 451.4 1777.0 457.8 1783.4 463.7 C1789.7 469.7 1797.2 475.9 1804.2 481.2 C1811.3 486.5 1818.9 489.5 1825.6 495.3 C1832.4 501.2 1839.4 510.3 1844.6 516.3 C1849.9 522.3 1851.9 526.0 1857.1 531.3 C1862.3 536.6 1868.0 542.0 1875.8 548.1 C1883.6 554.2 1896.2 563.9 1903.8 568.2 C1911.3 572.4 1915.4 571.0 1921.0 573.5 C1926.6 575.9 1931.8 580.7 1937.2 582.7 C1942.7 584.8 1947.7 584.2 1953.5 585.7 C1959.4 587.2 1966.4 587.0 1972.4 591.8 C1978.5 596.7 1983.7 608.7 1989.9 614.7 C1996.2 620.7 2003.0 624.0 2010.0 627.8 C2017.0 631.6 2025.4 634.6 2031.9 637.4 C2038.4 640.2 2043.1 642.4 2049.2 644.7 C2055.3 647.1 2061.6 649.4 2068.5 651.4 C2075.4 653.4 2083.3 654.6 2090.3 656.5 C2097.4 658.5 2104.6 661.6 2110.9 663.3 C2117.2 664.9 2122.5 665.7 2128.1 666.7 C2133.7 667.6 2138.3 668.8 2144.5 669.1 C2150.6 669.4 2158.6 668.3 2165.2 668.4 C2171.9 668.5 2178.0 669.0 2184.4 669.8 C2190.8 670.6 2197.8 672.3 2203.7 673.1 C2209.6 674.0 2217.3 674.5 2220.0 674.7" fill="none" stroke="#f2a45a" stroke-width="3.5"/><path d="M2070.2 412.7 C2066.8 415.1 2056.6 422.8 2050.0 426.9 C2043.5 431.0 2037.1 433.5 2030.8 437.4 C2024.6 441.2 2017.2 444.4 2012.6 449.8 C2008.0 455.3 2006.5 463.1 2003.2 470.3 C1999.8 477.5 1999.6 488.9 1992.6 493.1 C1985.6 497.3 1968.8 492.7 1961.1 495.6 C1953.3 498.4 1951.1 504.8 1946.2 510.3 C1941.2 515.7 1934.9 522.6 1931.3 528.5 C1927.6 534.4 1927.0 539.6 1924.0 545.4 C1921.1 551.2 1917.8 559.3 1913.8 563.1 C1909.9 566.8 1904.5 564.7 1900.4 568.0 C1896.3 571.2 1893.7 577.4 1889.0 582.7 C1884.4 588.0 1878.4 595.3 1872.5 599.8 C1866.5 604.3 1859.7 606.2 1853.4 609.6 C1847.0 613.0 1840.5 617.2 1834.3 620.4 C1828.2 623.5 1822.6 625.3 1816.4 628.5 C1810.2 631.6 1802.9 634.7 1797.0 639.4 C1791.1 644.2 1786.0 652.1 1781.1 657.1 C1776.3 662.1 1771.2 663.6 1767.9 669.3 C1764.6 674.9 1763.2 684.2 1761.4 691.0 C1759.6 697.8 1758.0 706.8 1757.3 709.9" fill="none" stroke="#f2a45a" stroke-width="3.5"/><path d="M1640.0 639.5 C1643.5 640.2 1654.7 642.7 1661.2 643.4 C1667.6 644.1 1672.8 643.0 1678.7 643.7 C1684.6 644.5 1690.2 646.5 1696.5 648.0 C1702.8 649.5 1710.2 650.8 1716.5 652.6 C1722.9 654.4 1728.4 656.6 1734.5 658.9 C1740.6 661.1 1747.8 663.7 1753.4 666.0 C1759.0 668.3 1761.8 670.5 1768.0 672.6 C1774.1 674.7 1782.6 676.7 1790.5 678.8 C1798.5 680.9 1809.4 681.9 1815.6 685.3 C1821.8 688.8 1823.1 695.3 1827.7 699.4 C1832.4 703.5 1840.8 708.2 1843.4 709.9" fill="none" stroke="#f2a45a" stroke-width="3.5"/><path d="M2042.8 228.9 C2043.1 233.5 2042.3 248.3 2044.6 256.5 C2046.9 264.7 2053.7 270.3 2056.5 278.2 C2059.2 286.0 2059.7 296.2 2061.0 303.7 C2062.4 311.2 2063.3 317.2 2064.4 323.4 C2065.5 329.6 2067.8 334.6 2067.7 340.9 C2067.5 347.2 2064.7 354.0 2063.5 361.0 C2062.3 368.0 2058.4 374.4 2060.4 383.1 C2062.4 391.9 2072.1 403.3 2075.3 413.7 C2078.6 424.1 2075.5 439.2 2079.8 445.5 C2084.0 451.9 2094.2 449.4 2100.6 451.7 C2107.0 454.0 2115.0 455.1 2118.2 459.4 C2121.4 463.7 2118.9 471.3 2119.8 477.5 C2120.8 483.7 2121.1 490.1 2123.8 496.7 C2126.5 503.4 2131.7 511.0 2136.0 517.5 C2140.2 523.9 2146.4 530.3 2149.3 535.5 C2152.1 540.7 2152.5 542.6 2153.3 548.6 C2154.0 554.6 2153.4 563.9 2153.9 571.5 C2154.4 579.1 2156.0 586.5 2156.2 594.0 C2156.4 601.6 2155.1 610.1 2155.2 616.7 C2155.3 623.3 2156.8 627.8 2156.7 633.6 C2156.6 639.4 2155.8 645.2 2154.8 651.5 C2153.7 657.8 2151.1 664.3 2150.5 671.2 C2149.9 678.2 2151.4 686.7 2151.0 693.1 C2150.7 699.6 2148.8 707.1 2148.4 709.9" fill="none" stroke="#f2a45a" stroke-width="3.5"/><path d="M2144.5 228.9 C2147.6 231.7 2157.0 240.0 2163.2 245.7 C2169.3 251.5 2175.9 258.4 2181.4 263.4 C2186.9 268.3 2190.6 272.3 2196.1 275.7 C2201.7 279.1 2211.8 282.3 2214.9 283.7" fill="none" stroke="#f2a45a" stroke-width="3.5"/><path d="M2220.0 283.7 C2218.0 287.1 2212.2 297.2 2208.2 304.1 C2204.2 310.9 2201.5 318.3 2196.1 324.9 C2190.6 331.5 2178.6 337.4 2175.6 343.8 C2172.7 350.2 2178.0 357.0 2178.6 363.5 C2179.2 369.9 2177.6 376.3 2179.4 382.4 C2181.3 388.5 2186.7 393.7 2189.8 400.1 C2192.9 406.6 2196.1 414.1 2198.0 421.1 C2199.9 428.0 2200.0 435.8 2201.3 441.9 C2202.6 448.0 2202.4 449.4 2205.5 457.6 C2208.6 465.7 2217.6 485.4 2220.0 490.9" fill="none" stroke="#f2a45a" stroke-width="3.5"/><path d="M2070.2 412.7 C2073.2 412.9 2081.6 414.2 2088.0 413.6 C2094.4 413.0 2102.2 410.2 2108.6 409.2 C2115.1 408.2 2120.0 407.7 2126.8 407.8 C2133.6 407.8 2142.5 409.5 2149.3 409.4 C2156.0 409.3 2161.7 407.9 2167.2 406.9 C2172.7 405.9 2176.6 404.3 2182.3 403.3 C2188.0 402.4 2195.2 402.5 2201.5 401.4 C2207.8 400.4 2216.9 397.8 2220.0 397.1" fill="none" stroke="#f2a45a" stroke-width="3.5"/><path d="M2093.7 553.5 C2096.9 553.4 2107.5 553.2 2113.3 552.6 C2119.1 552.0 2122.1 550.7 2128.2 549.9 C2134.4 549.1 2144.2 549.1 2150.2 547.6 C2156.3 546.2 2159.2 543.1 2164.6 541.5 C2169.9 539.8 2176.0 538.3 2182.5 537.8 C2189.0 537.2 2197.4 538.9 2203.6 538.3 C2209.9 537.6 2217.2 534.7 2220.0 534.0" fill="none" stroke="#f2a45a" stroke-width="3.5"/><path d="M2109.3 623.9 C2112.5 624.0 2122.1 625.1 2128.3 624.7 C2134.6 624.3 2141.0 622.4 2146.8 621.7 C2152.5 620.9 2156.6 620.5 2162.9 620.2 C2169.1 619.9 2177.9 620.0 2184.2 620.0 C2190.5 620.0 2194.8 620.3 2200.7 620.3 C2206.7 620.3 2216.8 620.0 2220.0 620.0" fill="none" stroke="#f2a45a" stroke-width="3.5"/><path d="M2220.0 444.0 C2216.6 445.1 2206.1 448.0 2200.0 450.8 C2193.9 453.5 2188.9 457.9 2183.2 460.6 C2177.5 463.3 2171.2 464.2 2165.7 466.7 C2160.3 469.1 2154.9 471.1 2150.4 475.3 C2146.0 479.6 2143.3 486.8 2139.0 492.2 C2134.7 497.6 2128.4 502.2 2124.4 507.8 C2120.5 513.3 2118.7 520.1 2115.3 525.8 C2111.9 531.5 2107.5 536.8 2103.9 541.9 C2100.4 547.0 2098.9 551.3 2093.8 556.2 C2088.8 561.1 2080.7 566.1 2073.7 571.3 C2066.8 576.4 2060.2 582.6 2052.0 587.3 C2043.9 591.9 2032.8 594.6 2025.0 599.1 C2017.1 603.6 2011.7 611.4 2004.9 614.3 C1998.1 617.1 1987.6 615.8 1984.2 616.1" fill="none" stroke="#f2a45a" stroke-width="3.5"/><path d="M1972.4 592.6 C1974.0 596.5 1980.3 608.8 1982.0 616.0 C1983.7 623.3 1982.9 629.9 1982.6 636.2 C1982.2 642.4 1980.3 647.3 1979.6 653.6 C1979.0 659.9 1979.3 667.3 1978.8 673.9 C1978.3 680.4 1977.3 687.1 1976.8 693.1 C1976.4 699.1 1976.4 707.1 1976.3 709.9" fill="none" stroke="#f2a45a" stroke-width="3.5"/><path d="M2003.7 612.2 C2005.8 615.5 2011.7 625.3 2016.4 632.4 C2021.2 639.6 2028.7 648.2 2032.0 655.2 C2035.2 662.1 2034.2 667.7 2035.9 674.0 C2037.6 680.3 2039.8 687.0 2042.3 693.0 C2044.7 698.9 2049.2 707.1 2050.6 709.9" fill="none" stroke="#f2a45a" stroke-width="3.5"/><path d="M1976.3 228.9 C1979.1 230.4 1986.9 236.5 1992.8 238.0 C1998.8 239.5 2005.8 237.7 2012.1 238.1 C2018.4 238.4 2024.9 237.1 2030.6 240.2 C2036.4 243.2 2044.0 253.6 2046.7 256.3" fill="none" stroke="#f2a45a" stroke-width="3.5"/><path d="M2241.3 228.9 C2240.5 231.7 2238.4 239.6 2236.5 245.3 C2234.6 251.1 2232.6 257.1 2230.0 263.3 C2227.3 269.6 2220.9 276.0 2220.4 282.6 C2220.0 289.3 2226.0 296.3 2227.4 303.3 C2228.8 310.2 2228.2 318.0 2229.0 324.5 C2229.8 331.0 2230.5 336.0 2232.3 342.2 C2234.2 348.4 2237.6 355.5 2240.1 361.7 C2242.7 368.0 2245.6 373.8 2247.6 379.5 C2249.7 385.3 2251.4 389.6 2252.4 396.4 C2253.3 403.2 2252.7 412.9 2253.5 420.2 C2254.2 427.5 2256.4 436.8 2256.9 440.2" fill="none" stroke="#f2a45a" stroke-width="3.5"/><path d="M2390.0 228.9 C2388.5 232.7 2384.4 244.4 2380.9 251.5 C2377.4 258.6 2370.2 265.0 2369.0 271.7 C2367.7 278.4 2372.9 285.3 2373.6 291.9 C2374.2 298.4 2374.2 305.3 2372.7 310.9 C2371.1 316.5 2368.1 320.5 2364.3 325.6 C2360.4 330.7 2353.5 335.8 2349.5 341.5 C2345.4 347.2 2342.6 354.1 2340.0 359.5 C2337.4 365.0 2335.3 368.6 2333.7 374.1 C2332.0 379.6 2332.5 385.9 2330.2 392.5 C2327.8 399.0 2323.5 406.2 2319.6 413.3 C2315.8 420.3 2308.7 427.4 2307.1 434.9 C2305.4 442.4 2310.1 450.6 2309.9 458.1 C2309.7 465.7 2306.7 473.3 2306.1 480.0 C2305.4 486.7 2306.1 491.7 2306.1 498.4 C2306.1 505.0 2306.9 513.2 2306.0 519.7 C2305.2 526.3 2302.9 531.3 2301.0 537.7 C2299.1 544.1 2296.7 551.8 2294.7 558.2 C2292.8 564.5 2290.7 569.7 2289.1 575.8 C2287.5 581.9 2286.7 587.7 2285.1 594.6 C2283.6 601.6 2281.3 610.8 2280.0 617.5 C2278.7 624.2 2278.5 629.0 2277.4 635.0 C2276.2 641.0 2274.9 647.3 2273.2 653.6 C2271.5 660.0 2268.6 666.6 2267.1 673.0 C2265.6 679.5 2265.4 686.2 2264.4 692.4 C2263.3 698.6 2261.4 707.2 2260.9 710.1" fill="none" stroke="#f2a45a" stroke-width="3.5"/><path d="M2210.0 405.0 C2213.9 404.3 2226.1 401.9 2233.3 400.7 C2240.5 399.6 2247.0 399.4 2253.4 398.2 C2259.7 397.1 2265.0 394.5 2271.3 394.0 C2277.6 393.4 2284.7 395.2 2291.2 394.9 C2297.6 394.6 2303.7 393.0 2310.0 392.2 C2316.3 391.4 2324.0 388.7 2328.9 390.1 C2333.9 391.6 2334.9 397.8 2339.7 400.9 C2344.6 403.9 2351.7 406.0 2357.8 408.1 C2364.0 410.3 2369.6 411.5 2376.5 413.7 C2383.3 416.0 2392.1 419.3 2399.0 421.6 C2405.9 423.8 2412.6 429.5 2417.9 427.3 C2423.2 425.2 2426.2 415.1 2430.7 408.7 C2435.3 402.3 2439.5 393.1 2445.3 388.9 C2451.0 384.7 2458.9 385.8 2465.1 383.4 C2471.3 381.0 2476.2 376.9 2482.5 374.3 C2488.7 371.8 2496.6 369.7 2502.7 368.3 C2508.8 366.9 2513.7 367.5 2519.0 366.0 C2524.4 364.5 2529.0 361.0 2534.7 359.2 C2540.3 357.4 2546.9 359.4 2552.8 355.3 C2558.7 351.3 2565.4 341.3 2569.9 334.6 C2574.4 328.0 2575.0 319.7 2579.9 315.3 C2584.8 310.9 2593.3 310.7 2599.5 308.1 C2605.6 305.6 2610.9 304.3 2616.9 299.9 C2623.0 295.6 2630.1 287.5 2635.9 281.8 C2641.7 276.2 2648.2 271.8 2651.7 266.1 C2655.2 260.3 2654.7 253.5 2656.7 247.3 C2658.7 241.1 2662.6 232.0 2663.8 228.9" fill="none" stroke="#f2a45a" stroke-width="3.5"/><path d="M2562.1 228.9 C2564.3 231.9 2571.0 240.8 2575.3 246.7 C2579.6 252.6 2583.3 259.3 2587.8 264.3 C2592.4 269.3 2597.9 271.7 2602.6 276.8 C2607.2 282.0 2611.6 289.7 2615.9 295.0 C2620.2 300.3 2623.8 304.0 2628.4 308.8 C2633.1 313.5 2640.1 318.3 2643.9 323.7 C2647.8 329.1 2649.0 334.8 2651.4 341.3 C2653.9 347.9 2655.7 356.3 2658.7 363.0 C2661.7 369.7 2667.3 374.8 2669.7 381.6 C2672.1 388.4 2671.3 397.0 2673.0 403.7 C2674.8 410.4 2678.2 415.0 2680.3 422.0 C2682.4 428.9 2683.6 436.3 2685.7 445.3 C2687.7 454.3 2692.1 467.4 2692.6 476.0 C2693.0 484.5 2689.8 489.3 2688.5 496.5 C2687.2 503.7 2685.8 512.2 2684.8 519.2 C2683.8 526.2 2683.2 532.0 2682.7 538.6 C2682.3 545.2 2683.0 552.7 2682.2 558.9 C2681.4 565.2 2679.1 570.2 2678.0 576.2 C2677.0 582.2 2677.3 588.5 2675.8 595.0 C2674.3 601.6 2671.6 609.0 2669.2 615.6 C2666.8 622.2 2664.4 628.3 2661.5 634.8 C2658.5 641.2 2654.5 647.8 2651.6 654.3 C2648.6 660.7 2646.2 667.0 2643.9 673.5 C2641.7 680.1 2639.4 687.4 2638.2 693.5 C2636.9 699.6 2636.7 707.4 2636.4 710.1" fill="none" stroke="#f2a45a" stroke-width="3.5"/><path d="M2397.8 420.6 C2398.0 423.7 2398.3 432.6 2398.8 439.1 C2399.3 445.6 2402.8 453.9 2400.8 459.7 C2398.9 465.4 2391.6 469.1 2387.0 473.4 C2382.5 477.6 2378.1 480.7 2373.7 485.2 C2369.3 489.7 2366.0 496.2 2360.6 500.4 C2355.1 504.7 2346.3 507.3 2341.1 510.7 C2335.8 514.2 2334.3 517.5 2329.2 521.0 C2324.0 524.5 2315.7 525.5 2310.1 531.6 C2304.6 537.7 2298.4 553.2 2296.1 557.6" fill="none" stroke="#f2a45a" stroke-width="3.5"/><path d="M2417.4 428.4 C2420.7 429.4 2430.7 433.2 2437.5 434.1 C2444.3 435.1 2450.4 435.5 2458.2 434.3 C2466.1 433.2 2477.3 427.0 2484.6 427.3 C2491.8 427.7 2495.5 433.0 2501.7 436.7 C2507.9 440.3 2515.6 446.3 2521.8 449.2 C2528.1 452.2 2533.1 451.7 2539.3 454.3 C2545.4 456.9 2553.2 461.8 2558.7 464.9 C2564.2 468.1 2565.9 470.9 2572.4 473.2 C2578.9 475.5 2589.6 476.6 2597.8 478.6 C2606.0 480.5 2614.2 484.3 2621.5 484.9 C2628.8 485.6 2635.5 483.6 2641.6 482.8 C2647.8 482.0 2652.3 477.6 2658.6 480.2 C2664.9 482.7 2672.9 492.0 2679.6 498.0 C2686.3 504.0 2692.2 512.5 2698.8 516.2 C2705.3 519.9 2712.5 518.4 2718.8 520.0 C2725.2 521.6 2730.5 523.9 2737.0 526.0 C2743.5 528.0 2750.7 531.0 2757.7 532.1 C2764.7 533.2 2771.7 532.2 2778.7 532.5 C2785.8 532.8 2796.4 533.8 2800.0 534.1" fill="none" stroke="#f2a45a" stroke-width="3.5"/><path d="M2401.7 459.7 C2405.0 462.3 2417.3 468.9 2421.2 475.4 C2425.2 481.8 2424.4 491.1 2425.4 498.5 C2426.3 505.9 2423.7 513.3 2426.9 519.9 C2430.1 526.6 2438.9 531.7 2444.6 538.3 C2450.3 544.8 2456.0 552.6 2461.1 559.0 C2466.3 565.5 2472.0 570.8 2475.5 576.8 C2479.0 582.7 2480.5 588.1 2482.0 594.8 C2483.5 601.5 2483.8 610.1 2484.5 616.8 C2485.1 623.6 2484.4 629.0 2485.7 635.5 C2487.0 642.0 2491.0 649.2 2492.5 655.7 C2494.0 662.2 2493.7 668.8 2494.9 674.7 C2496.0 680.6 2498.1 685.4 2499.6 691.3 C2501.0 697.2 2502.8 707.0 2503.4 710.1" fill="none" stroke="#f2a45a" stroke-width="3.5"/><path d="M2562.1 471.5 C2561.4 474.1 2559.8 481.1 2558.0 487.0 C2556.2 493.0 2555.3 501.1 2551.3 507.2 C2547.3 513.4 2539.5 518.8 2534.0 523.9 C2528.5 529.0 2523.9 532.7 2518.5 537.9 C2513.1 543.0 2507.6 549.6 2501.6 554.8 C2495.6 560.0 2489.5 565.2 2482.6 569.0 C2475.7 572.8 2467.4 574.8 2460.0 577.4 C2452.7 579.9 2444.8 581.7 2438.4 584.0 C2431.9 586.3 2427.3 588.9 2421.4 591.0 C2415.5 593.2 2408.9 594.4 2403.0 597.0 C2397.1 599.6 2392.1 602.5 2386.1 606.6 C2380.1 610.7 2373.8 616.7 2367.2 621.4 C2360.5 626.2 2353.0 630.6 2346.2 635.0 C2339.4 639.4 2332.8 643.7 2326.5 647.9 C2320.2 652.2 2315.1 656.5 2308.4 660.5 C2301.7 664.5 2291.5 668.0 2286.2 672.0 C2281.0 675.9 2281.2 680.2 2276.9 684.3 C2272.6 688.3 2264.8 691.9 2260.2 696.2 C2255.6 700.5 2251.0 707.8 2249.1 710.1" fill="none" stroke="#f2a45a" stroke-width="3.5"/><path d="M2307.8 565.4 C2310.5 566.8 2317.7 570.5 2324.2 573.8 C2330.7 577.1 2340.2 581.7 2346.8 585.4 C2353.5 589.1 2358.1 592.7 2364.3 596.0 C2370.4 599.3 2378.3 602.0 2383.9 605.0 C2389.6 608.0 2393.2 611.2 2398.3 614.2 C2403.4 617.2 2409.0 620.4 2414.3 623.2 C2419.6 625.9 2424.4 627.9 2429.9 630.6 C2435.4 633.3 2441.5 637.0 2447.4 639.5 C2453.4 642.1 2459.6 643.7 2465.5 645.8 C2471.3 647.9 2475.9 649.2 2482.5 652.0 C2489.0 654.8 2497.8 660.0 2504.6 662.4 C2511.5 664.8 2517.1 664.7 2523.7 666.5 C2530.2 668.3 2537.5 671.7 2544.0 673.2 C2550.4 674.8 2556.2 674.5 2562.4 675.8 C2568.5 677.2 2574.5 679.7 2580.8 681.4 C2587.1 683.2 2593.7 685.5 2600.4 686.4 C2607.2 687.2 2615.1 687.2 2621.4 686.6 C2627.7 686.1 2632.3 684.3 2638.4 683.0 C2644.5 681.8 2650.8 679.8 2657.9 679.1 C2665.0 678.5 2673.6 679.3 2680.8 679.2 C2688.1 679.1 2695.3 678.7 2701.4 678.6 C2707.5 678.5 2711.1 678.0 2717.5 678.3 C2724.0 678.7 2732.7 680.7 2740.1 680.8 C2747.5 680.8 2755.4 679.3 2761.9 678.7 C2768.5 678.1 2773.2 677.1 2779.5 677.1 C2785.9 677.1 2796.6 678.5 2800.0 678.8" fill="none" stroke="#f2a45a" stroke-width="3.5"/><path d="M2210.0 549.7 C2213.4 549.5 2223.9 548.8 2230.2 548.5 C2236.5 548.1 2240.9 546.9 2247.6 547.6 C2254.3 548.3 2262.3 551.5 2270.4 552.5 C2278.5 553.5 2291.8 553.4 2296.1 553.6" fill="none" stroke="#f2a45a" stroke-width="3.5"/><path d="M2757.7 534.1 C2758.1 538.0 2759.0 550.2 2760.0 557.6 C2761.0 565.1 2762.8 572.6 2763.7 578.7 C2764.7 584.9 2764.8 588.5 2765.9 594.6 C2767.0 600.6 2770.6 608.5 2770.4 615.1 C2770.2 621.7 2767.1 627.5 2764.6 634.4 C2762.2 641.3 2759.0 650.5 2755.8 656.6 C2752.5 662.6 2749.0 666.6 2745.0 670.6 C2740.9 674.7 2736.0 676.5 2731.4 680.9 C2726.7 685.4 2721.9 692.5 2717.2 697.4 C2712.5 702.2 2705.3 708.0 2703.0 710.1" fill="none" stroke="#f2a45a" stroke-width="3.5"/><path d="M2781.2 538.0 C2781.3 541.6 2781.6 552.6 2781.7 559.5 C2781.7 566.3 2781.0 573.3 2781.4 579.2 C2781.8 585.0 2784.1 588.2 2784.1 594.5 C2784.2 600.8 2781.4 610.3 2781.7 616.9 C2782.0 623.5 2785.4 627.4 2785.9 633.9 C2786.3 640.5 2784.4 649.5 2784.3 656.4 C2784.1 663.2 2784.4 669.6 2785.0 675.2 C2785.5 680.8 2787.0 684.1 2787.7 689.9 C2788.3 695.8 2788.8 706.8 2789.0 710.1" fill="none" stroke="#f2a45a" stroke-width="3.5"/><path d="M2210.0 647.5 C2213.2 647.4 2222.5 646.9 2229.0 646.6 C2235.5 646.3 2242.5 646.0 2248.9 645.7 C2255.2 645.4 2260.7 644.8 2267.1 644.9 C2273.6 645.0 2280.8 645.8 2287.6 646.2 C2294.5 646.6 2301.8 647.7 2308.4 647.2 C2314.9 646.6 2320.4 644.8 2326.9 642.9 C2333.3 641.0 2343.6 637.0 2346.9 635.8" fill="none" stroke="#f2a45a" stroke-width="3.5"/><path d="M2210.0 283.7 L2221.7 283.7" fill="none" stroke="#f2a45a" stroke-width="3.5"/><path d="M2210.0 467.6 C2214.2 471.7 2230.8 484.6 2235.4 492.3 C2240.0 500.0 2237.0 505.6 2237.7 513.6 C2238.3 521.6 2239.1 532.5 2239.4 540.1 C2239.6 547.6 2240.0 552.7 2239.3 559.0 C2238.5 565.2 2235.5 571.1 2234.7 577.6 C2233.9 584.1 2235.4 591.8 2234.6 598.1 C2233.8 604.4 2231.3 609.0 2230.0 615.4 C2228.7 621.8 2227.8 630.2 2226.9 636.7 C2226.0 643.3 2225.0 648.3 2224.3 654.6 C2223.7 660.9 2223.4 668.4 2223.0 674.3 C2222.5 680.3 2222.4 684.4 2221.5 690.4 C2220.7 696.4 2218.4 706.8 2217.8 710.1" fill="none" stroke="#f2a45a" stroke-width="3.5"/><path d="M1739.8 727.9 C1738.8 732.1 1735.0 744.1 1733.6 752.8 C1732.2 761.6 1731.2 772.1 1731.5 780.2 C1731.7 788.3 1734.8 794.7 1735.2 801.5 C1735.6 808.3 1733.5 814.6 1733.8 821.2 C1734.1 827.9 1736.8 835.1 1737.2 841.3 C1737.6 847.6 1737.1 851.7 1736.1 858.7 C1735.2 865.6 1733.3 875.2 1731.4 883.0 C1729.5 890.8 1728.6 900.6 1724.6 905.4 C1720.7 910.2 1710.7 910.5 1707.9 911.6" fill="none" stroke="#f2a45a" stroke-width="3.5"/><path d="M1640.0 879.6 C1643.2 880.0 1652.6 880.3 1659.3 881.8 C1666.0 883.4 1674.6 885.8 1680.2 888.9 C1685.7 892.1 1687.6 897.1 1692.6 900.7 C1697.5 904.3 1709.8 903.8 1709.8 910.4 C1709.7 917.0 1697.4 930.3 1692.4 940.3 C1687.4 950.3 1684.7 962.1 1679.8 970.2 C1674.9 978.2 1668.0 983.0 1662.9 988.5 C1657.8 994.0 1653.1 999.4 1649.3 1003.2 C1645.5 1007.0 1641.5 1010.0 1640.0 1011.4" fill="none" stroke="#f2a45a" stroke-width="3.5"/><path d="M1640.0 791.8 C1643.0 792.5 1651.3 795.1 1658.1 795.8 C1665.0 796.5 1674.1 795.0 1681.1 796.0 C1688.1 796.9 1693.5 799.9 1700.2 801.5 C1707.0 803.2 1715.0 804.1 1721.5 805.9 C1728.1 807.7 1733.6 812.5 1739.7 812.2 C1745.8 811.8 1752.0 805.9 1758.4 803.8 C1764.8 801.6 1771.5 801.3 1778.3 799.4 C1785.1 797.4 1792.3 794.7 1799.1 792.1 C1805.9 789.5 1812.7 787.0 1819.2 783.9 C1825.7 780.9 1831.0 775.9 1838.1 773.8 C1845.1 771.7 1855.1 772.2 1861.7 771.3 C1868.4 770.4 1871.3 769.9 1877.8 768.4 C1884.3 767.0 1893.4 764.9 1900.7 762.4 C1908.1 759.8 1914.7 756.6 1921.9 753.2 C1929.0 749.8 1937.1 743.9 1943.5 741.8 C1949.8 739.7 1953.5 742.2 1960.0 740.7 C1966.4 739.3 1975.7 735.5 1982.3 733.2 C1988.9 730.9 1993.2 728.5 1999.6 726.9 C2005.9 725.3 2013.5 724.6 2020.5 723.6 C2027.4 722.7 2034.5 722.1 2041.2 721.1 C2047.8 720.2 2054.4 719.4 2060.6 718.0 C2066.7 716.6 2071.8 713.6 2078.0 712.6 C2084.2 711.6 2091.2 712.3 2097.8 711.9 C2104.3 711.5 2110.3 710.0 2117.2 710.0 C2124.2 710.0 2132.5 711.9 2139.5 712.0 C2146.5 712.1 2152.3 711.9 2159.3 710.8 C2166.2 709.6 2174.6 706.2 2181.4 705.3 C2188.3 704.3 2193.8 705.4 2200.3 705.1 C2206.7 704.9 2216.7 704.2 2220.0 704.0" fill="none" stroke="#f2a45a" stroke-width="3.5"/><path d="M1947.4 704.0 C1946.8 708.0 1944.6 720.6 1943.7 728.0 C1942.9 735.3 1940.9 741.2 1942.3 748.2 C1943.7 755.2 1949.0 763.3 1952.0 769.9 C1955.0 776.4 1956.3 780.0 1960.1 787.4 C1964.0 794.8 1971.9 806.2 1975.1 814.3 C1978.3 822.4 1978.9 830.0 1979.4 835.9 C1979.9 841.8 1975.0 845.8 1978.1 849.7 C1981.2 853.5 1991.1 855.7 1998.2 859.0 C2005.4 862.3 2013.9 865.7 2021.0 869.4 C2028.1 873.2 2034.1 876.5 2040.7 881.6 C2047.3 886.8 2054.6 895.2 2060.4 900.5 C2066.3 905.9 2071.0 910.1 2075.8 913.7 C2080.6 917.3 2084.4 914.7 2089.1 922.0 C2093.9 929.3 2099.1 950.0 2104.2 957.4 C2109.3 964.9 2114.6 962.7 2119.8 966.6 C2125.0 970.4 2131.2 975.2 2135.4 980.6 C2139.7 985.9 2141.5 992.4 2145.2 998.6 C2149.0 1004.8 2154.0 1011.2 2157.9 1017.7 C2161.8 1024.2 2165.5 1031.2 2168.9 1037.9 C2172.2 1044.5 2175.0 1051.2 2177.8 1057.7 C2180.6 1064.3 2183.3 1070.4 2185.7 1077.1 C2188.0 1083.8 2188.9 1090.5 2191.9 1097.9 C2194.8 1105.2 2198.7 1114.2 2203.4 1121.0 C2208.1 1127.9 2217.3 1136.1 2220.0 1139.1" fill="none" stroke="#f2a45a" stroke-width="3.5"/><path d="M1975.3 815.8 C1978.2 815.0 1986.3 813.0 1992.7 811.0 C1999.2 809.1 2008.1 806.7 2014.2 804.2 C2020.4 801.6 2023.8 798.0 2029.6 795.6 C2035.5 793.2 2042.5 792.3 2049.4 789.7 C2056.3 787.1 2067.5 781.5 2071.1 779.8" fill="none" stroke="#f2a45a" stroke-width="3.5"/><path d="M1979.3 823.8 C1974.9 826.5 1960.6 835.7 1952.9 840.3 C1945.2 844.8 1939.2 847.1 1933.2 851.0 C1927.2 854.9 1922.4 858.4 1916.9 863.6 C1911.3 868.8 1906.5 877.7 1900.0 882.1 C1893.6 886.4 1884.9 886.7 1878.3 889.7 C1871.7 892.6 1865.9 895.2 1860.5 899.8 C1855.1 904.4 1851.0 912.0 1846.0 917.2 C1841.0 922.4 1832.9 924.9 1830.6 931.1 C1828.3 937.4 1831.0 946.6 1832.1 954.5 C1833.2 962.4 1835.8 971.2 1837.1 978.7 C1838.4 986.2 1838.5 992.3 1840.1 999.4 C1841.7 1006.4 1844.8 1014.1 1846.8 1021.1 C1848.7 1028.1 1850.1 1034.8 1851.9 1041.4 C1853.7 1048.1 1854.3 1054.7 1857.6 1061.0 C1860.9 1067.3 1869.2 1076.2 1871.5 1079.2" fill="none" stroke="#f2a45a" stroke-width="3.5"/><path d="M1707.9 911.6 C1712.3 910.7 1725.9 907.8 1734.6 906.3 C1743.2 904.8 1752.3 902.7 1759.7 902.7 C1767.0 902.6 1772.1 904.4 1778.7 906.3 C1785.2 908.1 1791.2 912.2 1799.1 913.7 C1806.9 915.3 1818.0 915.3 1825.8 915.4 C1833.6 915.6 1839.2 913.6 1845.8 914.6 C1852.4 915.7 1860.8 917.3 1865.3 921.6 C1869.7 925.9 1869.8 934.7 1872.5 940.6 C1875.3 946.6 1876.9 953.0 1881.6 957.4 C1886.3 961.7 1894.8 964.1 1900.8 966.8 C1906.9 969.4 1911.2 970.5 1917.9 973.3 C1924.5 976.1 1934.2 980.6 1940.9 983.6 C1947.5 986.5 1951.3 989.7 1958.0 991.1 C1964.7 992.6 1974.2 991.7 1981.1 992.2 C1988.1 992.6 1993.5 993.4 1999.6 993.8 C2005.7 994.2 2011.1 995.2 2017.8 994.6 C2024.6 994.0 2033.6 992.2 2040.1 990.1 C2046.7 987.9 2050.7 984.1 2057.3 981.6 C2063.9 979.2 2072.8 976.5 2079.6 975.4 C2086.4 974.4 2091.4 974.9 2098.1 975.5 C2104.7 976.1 2112.5 978.3 2119.5 979.0 C2126.6 979.7 2134.0 980.1 2140.4 979.8 C2146.8 979.6 2151.3 977.7 2158.0 977.5 C2164.6 977.4 2173.4 979.0 2180.5 979.0 C2187.7 979.0 2194.2 977.4 2200.8 977.5 C2207.3 977.6 2216.8 979.1 2220.0 979.4" fill="none" stroke="#f2a45a" stroke-width="3.5"/><path d="M1640.0 1111.2 C1642.9 1109.5 1651.8 1104.0 1657.3 1101.1 C1662.9 1098.3 1668.4 1097.5 1673.4 1094.2 C1678.5 1090.8 1680.8 1082.6 1687.9 1081.1 C1694.9 1079.6 1706.7 1084.3 1715.7 1085.1 C1724.6 1086.0 1734.3 1084.6 1741.4 1086.2 C1748.6 1087.8 1752.1 1092.8 1758.4 1094.7 C1764.7 1096.6 1772.6 1097.3 1779.1 1097.7 C1785.7 1098.1 1791.8 1097.6 1797.8 1097.0 C1803.7 1096.3 1808.5 1094.9 1814.8 1094.0 C1821.1 1093.0 1829.3 1092.5 1835.4 1091.3 C1841.4 1090.1 1845.2 1088.4 1851.2 1086.8 C1857.3 1085.3 1865.7 1084.0 1871.6 1082.2 C1877.5 1080.4 1880.8 1078.8 1886.7 1076.2 C1892.6 1073.5 1900.5 1069.6 1906.9 1066.4 C1913.4 1063.2 1918.9 1059.7 1925.5 1056.9 C1932.1 1054.2 1940.6 1052.0 1946.7 1049.9 C1952.8 1047.9 1956.6 1046.9 1962.1 1044.8 C1967.5 1042.7 1972.9 1039.4 1979.5 1037.2 C1986.0 1035.0 1994.9 1033.6 2001.3 1031.5 C2007.7 1029.3 2011.7 1026.0 2017.8 1024.3 C2024.0 1022.5 2031.6 1022.5 2038.1 1020.8 C2044.6 1019.0 2050.1 1015.4 2057.1 1013.6 C2064.1 1011.8 2073.4 1009.9 2080.0 1010.0 C2086.6 1010.2 2090.4 1013.3 2097.0 1014.5 C2103.5 1015.6 2112.2 1016.3 2119.4 1016.8 C2126.5 1017.3 2133.0 1017.2 2139.9 1017.6 C2146.8 1018.0 2154.6 1019.6 2160.9 1019.3 C2167.2 1019.0 2171.0 1016.2 2177.5 1015.7 C2184.0 1015.2 2192.7 1016.4 2199.8 1016.4 C2206.8 1016.3 2216.7 1015.5 2220.0 1015.4" fill="none" stroke="#f2a45a" stroke-width="3.5"/><path d="M1835.6 1099.2 C1832.5 1101.6 1822.7 1108.5 1816.7 1113.5 C1810.6 1118.6 1803.7 1122.3 1799.3 1129.5 C1794.8 1136.7 1793.6 1148.4 1790.1 1156.7 C1786.6 1165.0 1781.2 1173.0 1778.2 1179.4 C1775.1 1185.8 1772.8 1192.4 1771.7 1195.0" fill="none" stroke="#f2a45a" stroke-width="3.5"/><path d="M1879.5 1103.2 C1883.7 1104.3 1896.3 1106.7 1904.6 1109.7 C1912.8 1112.7 1920.8 1120.2 1928.9 1121.1 C1936.9 1121.9 1944.2 1116.5 1952.9 1114.8 C1961.5 1113.2 1973.2 1113.2 1980.8 1111.3 C1988.5 1109.3 1992.2 1106.6 1998.8 1103.1 C2005.4 1099.7 2013.9 1094.3 2020.5 1090.5 C2027.0 1086.7 2031.7 1083.4 2038.1 1080.5 C2044.5 1077.7 2051.8 1075.1 2058.9 1073.4 C2065.9 1071.7 2073.5 1071.4 2080.5 1070.4 C2087.4 1069.4 2094.4 1068.6 2100.5 1067.5 C2106.6 1066.3 2110.3 1065.7 2117.1 1063.3 C2123.8 1061.0 2134.2 1057.3 2141.0 1053.2 C2147.8 1049.1 2151.4 1042.7 2157.9 1039.0 C2164.3 1035.2 2172.9 1033.7 2179.9 1030.7 C2186.9 1027.8 2193.1 1024.0 2199.8 1021.5 C2206.5 1018.9 2216.7 1016.4 2220.0 1015.4" fill="none" stroke="#f2a45a" stroke-width="3.5"/><path d="M2019.2 1011.4 C2018.9 1015.4 2018.0 1027.6 2017.0 1035.4 C2015.9 1043.1 2012.7 1050.2 2013.1 1057.7 C2013.5 1065.2 2018.0 1073.4 2019.3 1080.5 C2020.6 1087.5 2020.8 1093.2 2021.2 1099.8 C2021.5 1106.4 2021.2 1114.1 2021.4 1120.1 C2021.6 1126.0 2022.4 1129.5 2022.5 1135.5 C2022.7 1141.4 2022.1 1149.1 2022.3 1155.7 C2022.4 1162.2 2023.1 1168.3 2023.2 1174.9 C2023.4 1181.4 2023.2 1191.7 2023.2 1195.0" fill="none" stroke="#f2a45a" stroke-width="3.5"/><path d="M2039.2 991.4 C2040.9 988.1 2046.0 978.8 2049.4 971.3 C2052.8 963.8 2055.4 952.1 2059.7 946.4 C2064.0 940.7 2069.7 940.5 2075.2 937.2 C2080.8 933.9 2086.6 928.4 2093.1 926.6 C2099.6 924.8 2106.8 926.6 2114.2 926.2 C2121.6 925.8 2129.5 924.4 2137.3 924.0 C2145.2 923.5 2154.4 923.7 2161.3 923.6 C2168.1 923.5 2172.1 923.7 2178.5 923.4 C2184.9 923.1 2193.0 922.0 2199.9 922.0 C2206.9 922.0 2216.7 923.3 2220.0 923.6" fill="none" stroke="#f2a45a" stroke-width="3.5"/><path d="M2107.1 700.0 C2107.0 703.1 2106.4 711.8 2106.7 718.3 C2107.0 724.9 2108.3 732.8 2108.8 739.5 C2109.4 746.2 2109.8 752.0 2110.1 758.8 C2110.4 765.5 2109.7 773.1 2110.6 780.0 C2111.4 787.0 2114.4 793.6 2115.2 800.3 C2116.0 807.0 2116.3 813.7 2115.4 820.4 C2114.4 827.1 2111.1 834.1 2109.7 840.6 C2108.4 847.2 2107.5 856.5 2107.1 859.7" fill="none" stroke="#f2a45a" stroke-width="3.5"/><path d="M2220.0 731.9 C2216.6 734.3 2206.1 741.5 2199.3 746.1 C2192.5 750.8 2185.3 755.3 2179.4 759.7 C2173.6 764.2 2169.1 768.0 2164.1 772.7 C2159.2 777.4 2153.0 782.0 2149.8 787.9 C2146.5 793.8 2146.3 801.5 2144.5 808.2 C2142.7 814.8 2139.9 824.5 2139.0 827.7" fill="none" stroke="#f2a45a" stroke-width="3.5"/><path d="M2174.9 700.0 C2174.7 703.2 2173.2 712.9 2173.8 719.3 C2174.4 725.8 2177.8 732.0 2178.5 738.8 C2179.3 745.5 2178.3 752.6 2178.2 759.8 C2178.1 767.0 2177.7 775.1 2178.0 782.0 C2178.3 788.8 2179.4 795.0 2180.0 801.0 C2180.6 807.0 2180.3 811.4 2181.4 817.9 C2182.5 824.3 2185.9 832.6 2186.5 839.5 C2187.1 846.3 2184.6 852.3 2185.0 859.2 C2185.3 866.1 2187.9 874.1 2188.6 880.7 C2189.3 887.2 2189.5 891.7 2189.2 898.4 C2188.9 905.0 2188.9 913.9 2186.9 920.6 C2185.0 927.3 2180.5 932.2 2177.4 938.8 C2174.3 945.4 2171.4 953.5 2168.3 960.3 C2165.2 967.0 2160.5 976.2 2159.0 979.4" fill="none" stroke="#f2a45a" stroke-width="3.5"/><path d="M2119.0 1195.0 C2120.8 1192.3 2126.0 1184.6 2129.5 1178.6 C2133.1 1172.6 2135.3 1162.6 2140.4 1159.2 C2145.5 1155.8 2153.4 1158.9 2160.0 1158.2 C2166.6 1157.5 2173.3 1155.7 2180.1 1155.0 C2186.9 1154.3 2194.1 1154.7 2200.7 1154.0 C2207.4 1153.4 2216.8 1151.6 2220.0 1151.1" fill="none" stroke="#f2a45a" stroke-width="3.5"/><path d="M2111.1 851.7 C2115.4 851.4 2128.6 850.4 2136.8 850.1 C2145.1 849.7 2153.3 849.2 2160.6 849.5 C2167.9 849.9 2174.0 851.4 2180.5 852.1 C2187.0 852.8 2193.1 853.8 2199.7 853.7 C2206.3 853.7 2216.6 852.0 2220.0 851.7" fill="none" stroke="#f2a45a" stroke-width="3.5"/><path d="M2115.0 799.8 C2118.8 800.4 2129.8 801.8 2137.3 803.4 C2144.8 805.0 2153.1 808.1 2160.2 809.4 C2167.3 810.7 2173.3 810.2 2179.8 811.2 C2186.3 812.3 2192.8 814.2 2199.5 815.6 C2206.2 817.0 2216.6 819.1 2220.0 819.8" fill="none" stroke="#f2a45a" stroke-width="3.5"/><path d="M2210.0 771.9 C2213.5 772.4 2224.4 773.6 2230.9 774.9 C2237.5 776.3 2243.0 779.8 2249.4 780.1 C2255.8 780.3 2262.4 777.1 2269.4 776.4 C2276.3 775.7 2284.4 776.9 2291.1 776.1 C2297.8 775.3 2303.6 773.1 2309.8 771.6 C2316.0 770.1 2322.0 768.2 2328.4 767.0 C2334.8 765.8 2341.2 765.7 2348.2 764.2 C2355.1 762.7 2362.8 760.0 2370.0 758.1 C2377.3 756.1 2384.6 754.1 2391.5 752.5 C2398.3 750.8 2404.4 750.4 2411.1 748.1 C2417.8 745.8 2425.2 741.0 2431.6 738.6 C2437.9 736.2 2443.2 736.5 2449.2 733.7 C2455.2 731.0 2461.0 724.9 2467.3 722.0 C2473.6 719.0 2480.6 718.1 2487.1 716.0 C2493.5 713.8 2500.2 711.8 2505.9 709.2 C2511.6 706.5 2518.8 701.5 2521.4 700.0" fill="none" stroke="#f2a45a" stroke-width="3.5"/><path d="M2349.7 700.0 C2350.0 703.7 2350.8 715.5 2351.2 722.2 C2351.7 728.8 2351.9 733.8 2352.5 740.0 C2353.0 746.2 2354.0 752.7 2354.5 759.4 C2355.1 766.1 2355.1 773.2 2355.7 780.3 C2356.4 787.3 2357.3 795.2 2358.4 801.8 C2359.5 808.4 2361.5 813.6 2362.5 819.9 C2363.4 826.1 2362.8 832.5 2363.9 839.2 C2365.1 845.8 2364.2 852.9 2369.2 860.0 C2374.3 867.0 2386.2 876.7 2394.0 881.3 C2401.7 885.9 2409.0 885.2 2415.6 887.6 C2422.2 889.9 2430.6 894.3 2433.6 895.6" fill="none" stroke="#f2a45a" stroke-width="3.5"/><path d="M2210.0 835.7 C2213.3 835.7 2222.7 835.7 2229.7 835.3 C2236.7 834.8 2245.4 833.2 2252.1 833.0 C2258.8 832.9 2264.0 834.5 2270.0 834.1 C2276.1 833.8 2281.4 830.9 2288.4 830.9 C2295.4 830.9 2305.0 834.0 2311.9 834.2 C2318.8 834.3 2323.2 831.8 2329.8 832.0 C2336.4 832.3 2344.6 834.6 2351.5 835.6 C2358.3 836.5 2364.4 838.6 2371.1 837.9 C2377.7 837.2 2385.2 833.2 2391.3 831.4 C2397.5 829.5 2401.9 828.3 2408.1 826.8 C2414.2 825.3 2422.0 824.3 2428.3 822.4 C2434.5 820.6 2439.2 817.4 2445.5 815.7 C2451.8 814.0 2458.8 813.9 2466.1 812.2 C2473.3 810.6 2480.8 809.0 2488.8 806.0 C2496.8 802.9 2506.9 795.7 2514.0 793.8 C2521.1 791.9 2525.7 794.8 2531.6 794.4 C2537.6 794.0 2543.9 792.6 2549.8 791.3 C2555.7 790.1 2560.3 787.9 2567.1 787.0 C2573.9 786.0 2583.6 786.5 2590.7 785.5 C2597.9 784.6 2603.5 782.1 2609.9 781.2 C2616.3 780.3 2622.8 779.7 2629.2 780.1 C2635.5 780.4 2641.4 781.9 2648.1 783.1 C2654.8 784.4 2662.3 786.6 2669.2 787.4 C2676.1 788.1 2683.3 787.7 2689.4 787.4 C2695.5 787.1 2699.6 786.1 2705.9 785.6 C2712.2 785.2 2721.0 785.0 2727.2 784.8 C2733.3 784.6 2736.8 784.1 2742.8 784.4 C2748.8 784.7 2756.6 786.3 2763.1 786.6 C2769.7 786.8 2775.9 786.3 2782.0 785.8 C2788.2 785.4 2797.0 784.2 2800.0 783.8" fill="none" stroke="#f2a45a" stroke-width="3.5"/><path d="M2210.0 979.4 C2213.0 978.8 2221.2 976.1 2228.0 975.3 C2234.9 974.5 2244.0 975.0 2251.1 974.7 C2258.2 974.4 2264.6 974.0 2270.8 973.5 C2277.0 973.0 2282.2 971.8 2288.4 971.8 C2294.6 971.7 2301.1 974.3 2308.0 973.2 C2315.0 972.2 2323.2 967.6 2330.1 965.5 C2337.0 963.3 2342.9 962.0 2349.5 960.3 C2356.1 958.6 2366.3 956.3 2369.7 955.5" fill="none" stroke="#f2a45a" stroke-width="3.5"/><path d="M2457.5 704.0 C2457.6 707.4 2457.3 717.8 2458.2 724.3 C2459.2 730.9 2462.0 737.3 2463.2 743.3 C2464.4 749.3 2463.4 754.6 2465.2 760.4 C2467.1 766.2 2470.7 771.0 2474.4 777.8 C2478.1 784.7 2482.3 792.8 2487.3 801.4 C2492.4 810.0 2500.0 821.9 2504.6 829.5 C2509.2 837.1 2511.9 840.1 2514.8 846.8 C2517.7 853.5 2520.1 862.6 2521.8 869.7 C2523.6 876.8 2524.3 883.4 2525.3 889.6 C2526.4 895.8 2525.4 899.0 2528.2 907.1 C2531.1 915.2 2538.1 927.6 2542.3 938.3 C2546.5 949.0 2551.5 965.9 2553.3 971.5" fill="none" stroke="#f2a45a" stroke-width="3.5"/><path d="M2549.3 700.0 C2549.2 703.6 2548.5 714.7 2548.5 721.6 C2548.5 728.5 2548.3 735.1 2549.3 741.2 C2550.2 747.3 2552.3 752.2 2554.2 758.4 C2556.1 764.7 2557.8 771.7 2560.7 778.5 C2563.5 785.2 2568.5 792.3 2571.4 798.9 C2574.2 805.5 2575.2 811.3 2577.5 818.1 C2579.9 824.8 2582.9 832.6 2585.4 839.2 C2587.9 845.8 2591.4 850.8 2592.8 857.8 C2594.2 864.7 2592.9 874.3 2593.6 881.1 C2594.2 887.9 2595.2 892.2 2596.6 898.5 C2598.0 904.7 2599.9 912.1 2601.9 918.6 C2603.8 925.1 2603.5 930.7 2608.0 937.5 C2612.6 944.3 2625.6 955.8 2629.2 959.5" fill="none" stroke="#f2a45a" stroke-width="3.5"/><path d="M2633.2 700.0 C2633.9 703.2 2636.8 712.5 2637.9 719.3 C2638.9 726.1 2638.9 734.2 2639.6 740.8 C2640.3 747.4 2640.6 752.6 2642.0 758.9 C2643.4 765.1 2646.8 771.1 2647.9 778.2 C2649.1 785.3 2647.6 794.6 2648.9 801.3 C2650.2 808.0 2654.1 811.7 2655.8 818.3 C2657.5 824.8 2657.7 833.5 2659.1 840.7 C2660.6 847.9 2661.6 853.2 2664.5 861.7 C2667.5 870.2 2675.0 886.6 2677.1 891.6" fill="none" stroke="#f2a45a" stroke-width="3.5"/><path d="M2701.0 700.0 C2700.4 703.7 2698.0 715.5 2697.1 721.9 C2696.2 728.4 2696.4 732.7 2695.7 738.7 C2695.0 744.8 2692.7 751.6 2692.8 758.3 C2693.0 764.9 2695.4 771.8 2696.6 778.8 C2697.8 785.8 2699.5 793.5 2700.1 800.2 C2700.8 806.8 2700.4 812.3 2700.4 818.6 C2700.4 825.0 2700.2 831.9 2700.2 838.5 C2700.1 845.0 2700.5 851.2 2700.0 858.0 C2699.5 864.9 2697.5 876.0 2697.0 879.6" fill="none" stroke="#f2a45a" stroke-width="3.5"/><path d="M2800.0 739.9 C2797.4 741.6 2789.9 746.6 2784.5 750.1 C2779.2 753.6 2773.9 757.7 2767.9 761.1 C2761.9 764.5 2754.9 767.4 2748.4 770.6 C2741.9 773.7 2732.2 778.3 2729.0 779.8" fill="none" stroke="#f2a45a" stroke-width="3.5"/><path d="M2393.6 879.6 C2396.8 880.6 2406.4 883.5 2412.6 885.5 C2418.7 887.4 2424.5 888.5 2430.4 891.1 C2436.3 893.7 2441.7 898.9 2448.1 901.1 C2454.5 903.3 2462.1 903.2 2468.7 904.3 C2475.3 905.4 2481.0 907.3 2487.7 907.9 C2494.4 908.4 2502.0 908.0 2508.8 907.6 C2515.6 907.2 2521.9 904.9 2528.5 905.7 C2535.1 906.5 2542.0 909.9 2548.5 912.4 C2555.0 914.8 2561.0 919.1 2567.6 920.5 C2574.3 922.0 2581.1 920.4 2588.3 921.1 C2595.5 921.8 2603.9 924.8 2611.0 924.8 C2618.1 924.8 2624.8 922.8 2630.8 921.2 C2636.9 919.5 2641.5 916.5 2647.5 914.6 C2653.5 912.6 2660.0 911.6 2667.0 909.4 C2674.1 907.1 2682.8 903.3 2689.8 900.9 C2696.7 898.6 2701.9 897.7 2708.6 895.3 C2715.3 892.9 2723.2 888.6 2729.8 886.5 C2736.4 884.5 2742.4 884.4 2748.3 883.0 C2754.1 881.6 2759.7 879.2 2765.1 878.2 C2770.4 877.3 2774.7 878.6 2780.6 877.5 C2786.4 876.4 2796.8 872.6 2800.0 871.7" fill="none" stroke="#f2a45a" stroke-width="3.5"/><path d="M2449.5 931.5 C2453.0 932.4 2464.2 935.5 2470.5 936.5 C2476.8 937.5 2481.2 936.5 2487.4 937.5 C2493.7 938.5 2501.1 940.6 2507.9 942.2 C2514.8 943.8 2521.9 945.2 2528.5 947.0 C2535.1 948.7 2540.4 950.8 2547.3 952.7 C2554.2 954.5 2562.6 957.5 2569.9 958.1 C2577.1 958.6 2584.0 957.1 2590.7 955.8 C2597.4 954.5 2603.8 951.5 2610.2 950.4 C2616.5 949.3 2622.5 950.5 2628.9 949.3 C2635.3 948.1 2641.5 944.2 2648.5 943.3 C2655.4 942.4 2663.9 944.7 2670.6 943.7 C2677.2 942.8 2681.4 937.5 2688.1 937.5 C2694.8 937.6 2704.1 942.5 2710.6 944.0 C2717.0 945.5 2721.2 946.1 2727.0 946.4 C2732.7 946.7 2739.0 946.3 2745.0 945.8 C2751.1 945.3 2756.8 944.9 2763.2 943.3 C2769.6 941.8 2777.2 938.0 2783.4 936.7 C2789.5 935.4 2797.2 935.7 2800.0 935.5" fill="none" stroke="#f2a45a" stroke-width="3.5"/><path d="M2321.8 891.6 C2325.2 894.2 2335.8 901.6 2342.6 907.1 C2349.4 912.7 2356.4 919.6 2362.8 925.0 C2369.1 930.4 2374.2 934.0 2380.7 939.7 C2387.2 945.5 2398.1 956.2 2401.6 959.5" fill="none" stroke="#f2a45a" stroke-width="3.5"/><path d="M2210.0 899.6 C2213.7 902.9 2227.4 912.4 2231.9 919.2 C2236.5 926.0 2235.6 933.4 2237.2 940.4 C2238.8 947.3 2240.1 954.5 2241.7 960.9 C2243.2 967.4 2247.4 972.7 2246.5 979.2 C2245.5 985.8 2238.8 993.6 2236.0 1000.3 C2233.2 1007.0 2229.2 1013.2 2229.6 1019.4 C2230.1 1025.6 2236.0 1031.4 2238.5 1037.7 C2241.0 1044.0 2242.4 1050.1 2244.4 1057.3 C2246.5 1064.4 2248.4 1073.6 2250.8 1080.6 C2253.2 1087.6 2255.3 1092.9 2258.8 1099.4 C2262.4 1105.9 2269.6 1113.5 2271.9 1119.8 C2274.3 1126.0 2272.7 1130.9 2273.1 1137.0 C2273.4 1143.1 2273.0 1150.2 2273.9 1156.5 C2274.8 1162.7 2277.2 1168.3 2278.5 1174.7 C2279.8 1181.2 2281.3 1191.6 2281.9 1195.0" fill="none" stroke="#f2a45a" stroke-width="3.5"/><path d="M2317.8 891.6 C2316.0 895.3 2310.1 905.9 2307.0 914.0 C2303.8 922.1 2300.7 932.9 2298.7 940.3 C2296.8 947.7 2295.9 951.9 2295.3 958.3 C2294.8 964.8 2295.2 972.5 2295.2 979.2 C2295.3 985.9 2295.1 991.8 2295.8 998.7 C2296.4 1005.7 2297.5 1014.2 2298.9 1021.1 C2300.4 1027.9 2300.5 1033.0 2304.2 1039.6 C2307.9 1046.2 2315.4 1053.9 2321.0 1060.7 C2326.7 1067.5 2331.2 1074.0 2338.0 1080.4 C2344.7 1086.8 2357.7 1096.1 2361.7 1099.2" fill="none" stroke="#f2a45a" stroke-width="3.5"/><path d="M2210.0 1099.2 C2213.1 1099.3 2221.8 1100.0 2228.5 1099.9 C2235.2 1099.9 2243.3 1097.2 2250.4 1099.0 C2257.4 1100.8 2264.8 1107.4 2271.1 1110.6 C2277.3 1113.8 2281.8 1115.4 2288.1 1118.2 C2294.5 1121.1 2302.6 1124.5 2309.2 1127.9 C2315.8 1131.2 2322.0 1134.1 2327.8 1138.2 C2333.7 1142.2 2338.8 1147.8 2344.4 1152.0 C2350.0 1156.1 2358.8 1161.2 2361.7 1163.1" fill="none" stroke="#f2a45a" stroke-width="3.5"/><path d="M2361.7 1163.1 C2364.5 1161.3 2372.9 1155.4 2378.4 1152.4 C2384.0 1149.4 2389.3 1147.9 2394.9 1145.0 C2400.4 1142.0 2406.5 1138.0 2412.0 1134.7 C2417.5 1131.3 2421.1 1126.3 2427.7 1125.0 C2434.3 1123.7 2445.0 1126.8 2451.7 1126.9 C2458.3 1127.0 2461.0 1126.0 2467.7 1125.4 C2474.3 1124.9 2484.9 1124.0 2491.6 1123.4 C2498.2 1122.9 2501.4 1122.7 2507.7 1122.1 C2513.9 1121.5 2522.1 1120.5 2529.1 1119.8 C2536.0 1119.1 2542.5 1118.0 2549.5 1118.0 C2556.5 1118.0 2564.4 1120.9 2571.1 1119.8 C2577.8 1118.6 2583.5 1114.5 2589.8 1111.1 C2596.1 1107.7 2606.0 1101.2 2609.2 1099.2" fill="none" stroke="#f2a45a" stroke-width="3.5"/><path d="M2740.9 700.0 C2740.1 703.1 2737.8 712.5 2735.6 718.9 C2733.4 725.3 2727.6 731.3 2727.8 738.3 C2728.1 745.4 2733.1 754.3 2736.9 761.1 C2740.6 767.9 2745.3 774.1 2750.4 778.9 C2755.5 783.8 2761.1 787.0 2767.5 790.4 C2773.9 793.9 2785.3 798.2 2788.8 799.8" fill="none" stroke="#f2a45a" stroke-width="3.5"/><path d="M2449.5 899.6 C2450.4 903.2 2453.9 914.6 2455.0 921.4 C2456.1 928.3 2454.1 934.6 2456.0 940.8 C2458.0 947.0 2464.0 952.8 2466.9 958.6 C2469.8 964.3 2472.4 972.6 2473.5 975.4" fill="none" stroke="#f2a45a" stroke-width="3.5"/><path d="M2569.3 919.6 C2568.5 922.7 2565.6 931.6 2564.5 938.1 C2563.4 944.7 2563.3 950.5 2562.7 958.7 C2562.2 966.9 2561.5 982.6 2561.3 987.4" fill="none" stroke="#f2a45a" stroke-width="3.5"/><path d="M2649.1 915.6 C2647.7 920.9 2643.9 937.1 2640.6 947.7 C2637.2 958.4 2631.1 974.2 2629.2 979.4" fill="none" stroke="#f2a45a" stroke-width="3.5"/><path d="M2729.0 887.6 C2730.9 893.2 2736.2 913.7 2740.4 921.0 C2744.5 928.3 2749.0 927.0 2753.8 931.5 C2758.6 936.0 2761.5 943.4 2769.2 948.1 C2776.9 952.7 2794.9 957.6 2800.0 959.5" fill="none" stroke="#f2a45a" stroke-width="3.5"/><path d="M2800.0 831.7 C2796.0 832.6 2784.1 835.0 2775.9 836.6 C2767.7 838.3 2758.5 838.8 2750.7 841.7 C2742.9 844.5 2735.9 849.4 2728.9 853.7 C2722.0 858.0 2712.3 865.3 2709.0 867.7" fill="none" stroke="#f2a45a" stroke-width="3.5"/><path d="M2210.0 939.5 C2213.1 939.4 2221.7 938.9 2228.5 938.6 C2235.2 938.3 2241.2 940.4 2250.3 937.7 C2259.3 934.9 2274.5 926.7 2282.7 922.1 C2290.9 917.4 2293.7 914.7 2299.6 909.7 C2305.4 904.6 2314.7 894.6 2317.8 891.6" fill="none" stroke="#f2a45a" stroke-width="3.5"/><path d="M2561.3 1051.3 C2565.7 1047.6 2577.5 1033.5 2587.4 1029.3 C2597.4 1025.1 2614.0 1021.0 2620.9 1026.0 C2627.9 1031.0 2627.8 1053.7 2629.2 1059.3" fill="none" stroke="#f2a45a" stroke-width="3.5"/><path d="M2553.3 1079.2 C2556.5 1079.9 2566.0 1080.8 2572.3 1083.0 C2578.5 1085.3 2584.4 1090.8 2590.7 1092.8 C2597.1 1094.8 2604.1 1093.8 2610.5 1094.9 C2616.9 1096.0 2626.0 1098.5 2629.2 1099.2" fill="none" stroke="#f2a45a" stroke-width="3.5"/><path d="M2091.8 480.0 C2091.1 485.8 2087.2 504.8 2087.4 514.6 C2087.7 524.4 2091.8 530.6 2093.5 538.9 C2095.3 547.2 2096.0 555.7 2097.9 564.4 C2099.7 573.2 2102.3 583.3 2104.4 591.5 C2106.5 599.8 2110.2 605.8 2110.5 614.0 C2110.8 622.2 2106.9 632.1 2106.1 640.7 C2105.3 649.3 2106.0 657.4 2105.6 665.6 C2105.3 673.9 2104.2 681.3 2104.0 689.9 C2103.8 698.4 2103.8 708.4 2104.6 717.0 C2105.3 725.6 2107.8 733.6 2108.5 741.5 C2109.3 749.4 2108.8 757.1 2109.2 764.4 C2109.6 771.7 2110.0 778.1 2110.8 785.4 C2111.5 792.7 2112.6 799.9 2113.5 808.3 C2114.4 816.8 2116.5 828.0 2116.3 836.2 C2116.1 844.4 2112.9 850.4 2112.3 857.5 C2111.8 864.5 2113.6 871.4 2113.0 878.5 C2112.4 885.6 2109.4 896.5 2108.7 900.1" fill="none" stroke="#f2a45a" stroke-width="3.5"/><path d="M2122.3 480.0 C2122.4 485.5 2120.8 504.2 2122.9 513.0 C2125.1 521.7 2131.1 526.9 2135.1 532.5 C2139.2 538.1 2143.7 541.1 2147.3 546.4 C2150.9 551.7 2154.6 558.5 2156.9 564.5 C2159.2 570.4 2158.5 576.6 2161.1 582.3 C2163.7 588.1 2168.9 593.4 2172.5 598.9 C2176.2 604.5 2180.5 608.7 2182.9 615.6 C2185.3 622.6 2186.0 632.2 2186.9 640.5 C2187.8 648.7 2187.0 656.3 2188.3 664.9 C2189.7 673.5 2194.0 683.0 2195.1 691.9 C2196.3 700.9 2194.4 710.6 2195.1 718.7 C2195.8 726.9 2197.7 732.7 2199.1 740.8 C2200.5 748.8 2203.0 758.0 2203.7 766.8 C2204.5 775.7 2203.8 784.9 2203.5 793.6 C2203.3 802.3 2202.1 811.5 2202.4 819.1 C2202.7 826.7 2203.9 832.7 2205.3 839.1 C2206.7 845.6 2209.4 851.1 2210.7 857.6 C2212.1 864.0 2212.3 870.8 2213.3 877.9 C2214.4 884.9 2216.5 896.4 2217.1 900.1" fill="none" stroke="#f2a45a" stroke-width="3.5"/><path d="M2230.7 480.0 C2231.8 485.9 2236.0 505.4 2237.2 515.5 C2238.4 525.5 2237.4 532.3 2237.7 540.2 C2237.9 548.1 2239.4 554.5 2238.6 563.0 C2237.8 571.5 2235.6 582.1 2232.8 591.1 C2230.1 600.1 2224.3 608.9 2222.2 617.0 C2220.0 625.0 2220.5 631.2 2220.0 639.5 C2219.5 647.7 2219.7 658.1 2219.2 666.6 C2218.6 675.0 2217.3 682.0 2216.6 690.1 C2215.9 698.2 2214.8 706.5 2215.0 715.2 C2215.1 723.8 2216.5 733.1 2217.7 742.0 C2218.8 750.8 2220.1 759.9 2221.8 768.4 C2223.4 776.8 2225.5 784.1 2227.7 792.5 C2229.9 800.8 2233.5 810.6 2235.0 818.4 C2236.5 826.3 2236.2 832.7 2236.6 839.6 C2237.0 846.5 2237.1 852.7 2237.4 859.7 C2237.7 866.6 2238.4 874.6 2238.4 881.4 C2238.5 888.1 2237.6 896.9 2237.5 900.1" fill="none" stroke="#f2a45a" stroke-width="3.5"/><path d="M2305.2 480.0 C2305.2 484.4 2305.0 497.8 2305.4 506.5 C2305.9 515.1 2308.6 523.4 2307.9 532.0 C2307.1 540.5 2303.9 549.5 2300.9 557.7 C2297.9 565.8 2291.9 572.5 2290.0 581.1 C2288.1 589.6 2290.0 600.8 2289.3 609.0 C2288.6 617.2 2287.6 621.2 2285.9 630.4 C2284.1 639.7 2280.4 654.1 2278.6 664.6 C2276.7 675.0 2276.4 684.0 2274.9 693.1 C2273.4 702.1 2269.7 711.4 2269.6 719.0 C2269.5 726.6 2273.5 731.5 2274.4 738.6 C2275.2 745.8 2273.6 754.3 2274.5 762.1 C2275.4 769.8 2278.5 778.0 2279.6 785.2 C2280.7 792.5 2279.9 797.7 2280.9 805.4 C2281.9 813.0 2283.9 823.4 2285.4 831.4 C2287.0 839.3 2288.8 845.2 2290.3 852.9 C2291.7 860.5 2292.8 869.3 2294.1 877.2 C2295.5 885.0 2297.7 896.2 2298.4 900.1" fill="none" stroke="#f2a45a" stroke-width="3.5"/><path d="M1980.0 632.4 C1984.1 633.0 1996.1 634.2 2004.9 636.0 C2013.6 637.7 2023.8 640.3 2032.5 642.8 C2041.2 645.2 2048.5 648.9 2057.1 650.7 C2065.6 652.6 2075.9 653.0 2083.6 654.0 C2091.3 655.0 2096.3 655.5 2103.5 656.9 C2110.7 658.3 2118.9 661.6 2126.8 662.3 C2134.7 663.0 2143.4 660.2 2150.7 660.9 C2158.0 661.6 2163.1 665.6 2170.6 666.6 C2178.0 667.6 2187.6 666.7 2195.3 667.0 C2203.1 667.2 2209.4 667.6 2217.0 668.2 C2224.7 668.8 2233.4 669.7 2241.2 670.4 C2249.0 671.1 2257.0 672.1 2263.9 672.4 C2270.9 672.8 2276.0 672.1 2283.0 672.3 C2290.1 672.5 2298.3 674.3 2306.2 673.7 C2314.1 673.1 2322.9 669.6 2330.4 668.8 C2337.9 668.1 2343.7 668.1 2351.2 669.1 C2358.6 670.0 2367.4 673.1 2375.1 674.6 C2382.8 676.1 2390.1 676.6 2397.3 678.1 C2404.5 679.6 2411.2 682.5 2418.2 683.6 C2425.2 684.7 2432.5 683.5 2439.5 684.5 C2446.4 685.6 2456.6 689.1 2460.0 690.0" fill="none" stroke="#f2a45a" stroke-width="3.5"/><path d="M1980.0 723.9 C1983.7 723.9 1995.2 724.8 2002.4 723.8 C2009.6 722.8 2015.5 719.1 2023.2 717.8 C2030.8 716.6 2040.8 716.4 2048.5 716.1 C2056.2 715.8 2062.1 716.2 2069.3 716.0 C2076.6 715.8 2084.2 715.2 2091.9 715.2 C2099.6 715.1 2107.6 716.5 2115.6 715.8 C2123.7 715.0 2132.7 711.1 2140.3 710.6 C2147.8 710.0 2153.5 712.5 2160.9 712.7 C2168.4 712.8 2177.3 711.5 2184.9 711.6 C2192.5 711.6 2199.3 712.8 2206.4 713.2 C2213.6 713.6 2220.2 713.0 2227.8 713.9 C2235.5 714.8 2244.4 718.1 2252.3 718.8 C2260.3 719.4 2268.3 718.0 2275.5 717.9 C2282.7 717.8 2287.9 718.4 2295.3 718.3 C2302.7 718.2 2312.0 717.1 2319.8 717.2 C2327.6 717.2 2334.5 718.1 2341.9 718.7 C2349.3 719.4 2357.0 720.5 2364.1 721.2 C2371.3 722.0 2377.9 722.0 2384.6 723.2 C2391.2 724.4 2397.7 727.7 2404.1 728.6 C2410.5 729.5 2417.1 728.1 2423.2 728.4 C2429.2 728.7 2434.4 729.4 2440.5 730.4 C2446.6 731.3 2456.8 733.4 2460.0 734.1" fill="none" stroke="#f2a45a" stroke-width="3.5"/><path d="M1980.0 812.0 C1983.7 811.1 1994.8 807.8 2001.9 807.0 C2009.1 806.1 2015.4 807.7 2023.0 806.8 C2030.6 805.9 2039.6 802.4 2047.5 801.6 C2055.5 800.8 2063.3 802.0 2070.6 802.1 C2078.0 802.2 2084.1 801.8 2091.5 802.2 C2098.8 802.5 2106.7 804.9 2114.6 804.4 C2122.6 803.8 2131.1 800.9 2139.1 798.7 C2147.1 796.4 2154.9 793.2 2162.6 791.0 C2170.3 788.7 2178.2 786.9 2185.1 785.2 C2192.0 783.6 2196.7 781.7 2204.0 781.2 C2211.3 780.7 2221.0 782.8 2228.8 782.5 C2236.5 782.2 2243.0 779.4 2250.4 779.3 C2257.8 779.2 2266.0 781.4 2273.3 782.0 C2280.6 782.5 2286.4 782.2 2294.3 782.6 C2302.1 782.9 2312.8 782.9 2320.5 783.9 C2328.2 784.9 2333.3 786.5 2340.3 788.4 C2347.3 790.3 2354.6 793.1 2362.4 795.1 C2370.3 797.2 2380.4 799.3 2387.4 800.6 C2394.4 801.9 2398.4 801.7 2404.4 803.0 C2410.5 804.4 2417.4 807.7 2423.7 808.5 C2430.0 809.3 2436.2 807.5 2442.3 808.1 C2448.3 808.7 2457.1 811.3 2460.0 812.0" fill="none" stroke="#f2a45a" stroke-width="3.5"/><path d="M1980.0 852.6 C1983.6 852.7 1994.5 854.1 2001.4 853.3 C2008.2 852.6 2014.3 848.6 2021.1 848.1 C2027.9 847.6 2035.8 850.6 2042.3 850.2 C2048.9 849.8 2054.3 846.3 2060.6 845.6 C2066.9 844.9 2072.7 846.2 2080.3 846.0 C2087.8 845.8 2097.8 845.2 2105.9 844.2 C2113.9 843.2 2121.5 840.7 2128.7 840.1 C2135.8 839.4 2141.3 840.0 2148.6 840.2 C2155.9 840.3 2164.8 840.5 2172.6 840.9 C2180.4 841.4 2188.2 842.1 2195.3 842.9 C2202.4 843.6 2208.1 845.3 2215.2 845.5 C2222.2 845.7 2230.0 844.8 2237.7 844.2 C2245.4 843.5 2253.6 842.3 2261.6 841.3 C2269.5 840.3 2277.7 838.0 2285.3 838.0 C2292.9 838.0 2299.5 839.7 2307.3 841.5 C2315.1 843.2 2324.0 846.9 2331.9 848.4 C2339.8 849.9 2347.7 850.0 2354.8 850.7 C2361.9 851.3 2367.9 852.7 2374.6 852.3 C2381.3 851.8 2388.0 849.0 2394.8 848.1 C2401.7 847.3 2408.1 847.4 2415.5 847.0 C2423.0 846.5 2432.3 845.6 2439.7 845.4 C2447.1 845.2 2456.6 845.8 2460.0 845.9" fill="none" stroke="#f2a45a" stroke-width="3.5"/><path d="M1980.0 615.5 C1985.9 614.3 2006.8 611.7 2015.3 608.4 C2023.8 605.1 2025.5 599.9 2031.0 595.6 C2036.4 591.2 2041.5 586.7 2048.0 582.3 C2054.5 577.9 2062.7 573.3 2070.2 569.0 C2077.7 564.8 2085.9 559.3 2092.8 556.8 C2099.8 554.4 2105.5 556.0 2111.9 554.6 C2118.3 553.1 2125.0 549.4 2131.4 548.0 C2137.8 546.7 2143.8 547.1 2150.6 546.5 C2157.3 545.9 2164.4 544.2 2171.8 544.5 C2179.1 544.9 2187.4 548.4 2194.6 548.6 C2201.9 548.7 2208.0 545.2 2215.5 545.6 C2223.0 545.9 2231.6 549.7 2239.6 550.7 C2247.6 551.7 2255.6 551.2 2263.5 551.7 C2271.4 552.1 2279.5 553.5 2287.0 553.3 C2294.5 553.1 2301.8 551.3 2308.6 550.5 C2315.4 549.6 2321.0 548.8 2328.0 548.4 C2335.0 547.9 2342.8 548.5 2350.7 547.8 C2358.6 547.0 2367.3 544.9 2375.5 544.1 C2383.6 543.2 2392.2 543.2 2399.7 542.6 C2407.2 542.1 2416.9 541.3 2420.4 541.0" fill="none" stroke="#f2a45a" stroke-width="3.5"/><path d="M2460.0 554.5 C2456.7 556.3 2446.0 560.7 2440.1 565.0 C2434.1 569.2 2430.4 576.2 2424.3 580.1 C2418.2 583.9 2409.5 584.6 2403.4 588.0 C2397.3 591.5 2393.0 597.1 2387.7 600.8 C2382.4 604.6 2377.4 607.5 2371.7 610.4 C2365.9 613.3 2359.0 615.4 2353.2 618.2 C2347.4 621.0 2342.9 623.9 2337.0 627.2 C2331.1 630.4 2326.7 635.0 2318.0 637.6 C2309.3 640.2 2290.4 641.8 2284.9 642.6" fill="none" stroke="#f2a45a" stroke-width="3.5"/><path d="M2318.8 564.7 C2321.3 566.6 2328.6 572.4 2334.0 575.9 C2339.3 579.4 2344.9 582.2 2350.7 585.7 C2356.6 589.1 2363.5 593.5 2369.1 596.8 C2374.8 600.1 2378.7 602.9 2384.6 605.6 C2390.5 608.3 2397.7 611.1 2404.5 613.1 C2411.3 615.1 2419.2 616.3 2425.2 617.8 C2431.2 619.2 2434.6 620.1 2440.4 622.0 C2446.2 623.9 2456.7 627.9 2460.0 629.1" fill="none" stroke="#f2a45a" stroke-width="3.5"/><path d="M1996.9 767.9 C2001.0 766.5 2013.0 762.2 2021.3 759.2 C2029.6 756.1 2039.1 752.4 2046.6 749.7 C2054.0 747.0 2060.1 745.4 2065.8 743.2 C2071.5 740.9 2075.5 739.1 2080.7 736.2 C2086.0 733.4 2091.5 729.1 2097.3 725.9 C2103.1 722.7 2112.5 718.6 2115.5 717.1" fill="none" stroke="#f2a45a" stroke-width="3.5"/><path d="M2115.5 622.3 C2119.5 622.8 2130.7 625.2 2139.4 625.6 C2148.1 626.0 2159.0 624.4 2167.9 624.6 C2176.8 624.9 2184.8 627.0 2192.8 627.1 C2200.9 627.1 2208.4 625.4 2216.2 624.9 C2224.0 624.4 2232.2 624.9 2239.6 624.0 C2247.1 623.1 2253.2 621.1 2260.8 619.7 C2268.4 618.2 2278.2 615.3 2285.3 615.3 C2292.4 615.3 2297.6 618.4 2303.3 619.4 C2309.0 620.5 2313.9 621.0 2319.7 621.7 C2325.6 622.4 2332.7 619.1 2338.5 623.5 C2344.2 627.9 2348.8 641.6 2354.2 648.0 C2359.7 654.3 2365.9 658.4 2371.2 661.7 C2376.4 665.0 2381.5 663.3 2385.6 667.6 C2389.8 671.9 2392.5 681.7 2396.1 687.6 C2399.6 693.5 2403.1 698.0 2406.9 703.1 C2410.7 708.2 2415.8 710.4 2418.8 718.2 C2421.9 725.9 2425.0 738.7 2425.4 749.5 C2425.8 760.4 2422.6 773.7 2421.2 783.1 C2419.8 792.5 2417.8 798.9 2416.9 805.9 C2415.9 812.9 2416.2 819.2 2415.7 825.0 C2415.2 830.7 2415.3 834.1 2414.0 840.4 C2412.7 846.7 2409.1 856.5 2407.9 862.9 C2406.8 869.3 2407.8 872.6 2407.1 878.8 C2406.4 885.0 2404.1 896.5 2403.4 900.1" fill="none" stroke="#f2a45a" stroke-width="3.5"/><path d="M2318.8 683.3 C2320.2 685.9 2324.5 693.7 2327.2 699.0 C2330.0 704.4 2332.9 709.2 2335.4 715.4 C2337.9 721.6 2339.3 730.0 2342.0 736.2 C2344.8 742.4 2351.5 744.6 2351.8 752.7 C2352.2 760.8 2347.1 773.9 2344.2 784.8 C2341.2 795.8 2335.0 809.3 2334.1 818.4 C2333.1 827.6 2337.1 832.9 2338.5 839.9 C2339.9 846.9 2341.0 854.1 2342.6 860.5 C2344.3 866.8 2346.7 871.4 2348.4 878.0 C2350.1 884.6 2351.9 896.4 2352.6 900.1" fill="none" stroke="#f2a45a" stroke-width="3.5"/><path d="M2149.4 717.1 C2147.9 719.9 2142.8 728.5 2140.3 734.0 C2137.7 739.6 2137.2 744.3 2134.3 750.3 C2131.4 756.3 2125.8 764.2 2122.7 770.0 C2119.6 775.8 2116.7 782.4 2115.5 784.9" fill="none" stroke="#f2a45a" stroke-width="3.5"/><path d="M2176.5 784.9 C2180.1 785.0 2191.7 785.9 2198.5 785.9 C2205.3 785.9 2214.0 785.0 2217.1 784.9" fill="none" stroke="#f2a45a" stroke-width="3.5"/><path d="M2030.8 642.6 C2030.1 645.8 2027.7 655.0 2026.4 661.5 C2025.1 668.0 2024.0 674.3 2023.0 681.4 C2022.0 688.4 2020.8 696.5 2020.3 703.6 C2019.9 710.7 2019.2 717.5 2020.2 724.2 C2021.3 730.8 2024.5 736.5 2026.8 743.8 C2029.1 751.1 2033.0 763.9 2034.2 767.9" fill="none" stroke="#f2a45a" stroke-width="3.5"/><path d="M2386.5 669.7 C2389.7 669.0 2399.6 667.0 2405.7 665.3 C2411.9 663.6 2417.3 661.2 2423.5 659.8 C2429.6 658.3 2436.4 658.3 2442.5 656.6 C2448.6 654.9 2457.1 650.6 2460.0 649.4" fill="none" stroke="#f2a45a" stroke-width="3.5"/><path d="M2159.5 541.0 C2160.0 537.9 2162.0 529.3 2162.3 522.7 C2162.6 516.2 2161.3 508.3 2161.4 501.8 C2161.5 495.2 2162.7 486.5 2162.9 483.4" fill="none" stroke="#f2a45a" stroke-width="3.5"/><path d="M2064.7 900.1 C2067.5 895.3 2075.7 879.6 2081.3 871.6 C2086.8 863.7 2092.4 858.1 2098.1 852.1 C2103.8 846.1 2112.6 838.4 2115.5 835.7" fill="none" stroke="#f2a45a" stroke-width="3.5"/><path d="M2420.4 784.9 C2423.6 783.5 2433.2 778.8 2439.8 776.5 C2446.4 774.3 2456.6 772.2 2460.0 771.3" fill="none" stroke="#f2a45a" stroke-width="3.5"/><path d="M2389.6 747.9 C2392.4 750.4 2401.5 756.9 2406.5 763.0 C2411.4 769.1 2415.1 778.2 2419.4 784.4 C2423.7 790.6 2427.2 795.2 2432.5 800.3 C2437.7 805.3 2445.0 809.7 2451.0 814.6 C2456.9 819.6 2463.2 824.0 2468.2 830.0 C2473.2 836.1 2477.1 845.0 2481.0 851.0 C2484.8 856.9 2491.7 859.7 2491.2 865.7 C2490.8 871.7 2482.6 879.9 2478.3 886.9 C2474.0 893.8 2467.6 904.1 2465.5 907.6" fill="none" stroke="#f2a45a" stroke-width="3.5"/><path d="M2401.6 700.0 C2402.4 703.4 2405.1 713.2 2406.3 720.2 C2407.4 727.2 2407.9 735.2 2408.8 742.0 C2409.6 748.8 2409.7 754.6 2411.4 761.0 C2413.1 767.3 2417.4 773.0 2419.1 779.9 C2420.9 786.7 2421.1 795.2 2422.0 802.0 C2422.9 808.7 2425.0 814.1 2424.4 820.3 C2423.8 826.5 2421.1 832.6 2418.7 839.2 C2416.2 845.7 2411.1 856.3 2409.6 859.7" fill="none" stroke="#f2a45a" stroke-width="3.5"/><path d="M2489.4 867.7 C2492.9 866.9 2503.7 864.5 2510.3 863.2 C2517.0 862.0 2522.8 860.2 2529.5 860.2 C2536.1 860.1 2543.4 861.6 2550.1 862.9 C2556.8 864.2 2563.5 867.6 2569.8 867.9 C2576.2 868.1 2581.6 865.2 2588.0 864.2 C2594.4 863.1 2601.3 861.4 2608.2 861.5 C2615.0 861.6 2622.2 863.6 2629.0 864.6 C2635.9 865.7 2642.8 868.0 2649.2 867.6 C2655.7 867.1 2660.9 863.4 2667.9 862.1 C2674.8 860.8 2684.0 860.9 2690.9 859.8 C2697.8 858.8 2702.5 857.4 2709.1 855.8 C2715.7 854.3 2723.3 851.4 2730.3 850.5 C2737.4 849.7 2743.6 851.0 2751.2 850.5 C2758.8 849.9 2768.0 848.1 2776.2 847.0 C2784.3 845.9 2796.0 844.3 2800.0 843.7" fill="none" stroke="#f2a45a" stroke-width="3.5"/><path d="M2465.5 811.8 C2467.7 814.4 2474.6 823.2 2478.9 827.5 C2483.2 831.8 2485.4 833.4 2491.1 837.7 C2496.7 842.0 2505.9 853.1 2512.9 853.2 C2519.8 853.2 2526.9 842.5 2532.8 838.1 C2538.6 833.6 2542.0 827.5 2547.8 826.7 C2553.6 825.8 2560.4 830.9 2567.5 833.1 C2574.7 835.3 2583.6 842.0 2590.6 839.8 C2597.5 837.6 2606.1 823.1 2609.2 819.8" fill="none" stroke="#f2a45a" stroke-width="3.5"/><path d="M2501.4 907.6 C2503.4 912.6 2512.6 928.7 2513.2 937.7 C2513.8 946.7 2507.6 954.7 2504.9 961.7 C2502.3 968.6 2498.7 976.5 2497.4 979.4" fill="none" stroke="#f2a45a" stroke-width="3.5"/><path d="M2529.4 700.0 C2528.2 703.3 2524.9 712.9 2522.2 719.7 C2519.6 726.6 2516.6 735.5 2513.3 741.2 C2510.0 747.0 2506.4 749.3 2502.6 754.3 C2498.7 759.4 2495.7 765.0 2490.2 771.3 C2484.7 777.5 2472.9 788.4 2469.5 791.8" fill="none" stroke="#f2a45a" stroke-width="3.5"/><path d="M2609.2 867.7 C2610.9 870.1 2616.0 877.3 2619.3 882.5 C2622.5 887.7 2623.6 893.4 2628.6 898.9 C2633.6 904.4 2645.7 912.8 2649.1 915.6" fill="none" stroke="#f2a45a" stroke-width="3.5"/><path d="M2665.1 859.7 C2667.0 862.7 2672.8 870.8 2676.5 877.5 C2680.3 884.2 2682.6 892.5 2687.7 899.9 C2692.8 907.3 2700.2 914.2 2707.1 922.1 C2713.9 930.1 2725.3 943.3 2729.0 947.5" fill="none" stroke="#f2a45a" stroke-width="3.5"/><path d="M2569.3 787.8 C2570.8 784.3 2575.7 773.7 2578.2 766.9 C2580.8 760.0 2579.1 754.2 2584.5 746.8 C2589.9 739.3 2602.6 729.9 2610.7 722.2 C2618.8 714.4 2629.4 703.7 2633.2 700.0" fill="none" stroke="#f2a45a" stroke-width="3.5"/><path d="M2729.0 779.8 C2730.7 783.4 2736.4 794.8 2739.5 801.4 C2742.6 808.0 2744.8 812.9 2747.6 819.4 C2750.4 825.9 2754.1 833.9 2756.2 840.2 C2758.3 846.6 2758.2 849.8 2760.3 857.7 C2762.4 865.6 2767.5 882.6 2768.9 887.6" fill="none" stroke="#f2a45a" stroke-width="3.5"/><path d="M2800.0 907.6 C2796.7 908.2 2786.6 909.8 2780.2 911.0 C2773.8 912.2 2767.8 916.1 2761.8 914.7 C2755.9 913.2 2750.0 906.8 2744.5 902.2 C2739.0 897.7 2731.6 890.1 2729.0 887.6" fill="none" stroke="#f2a45a" stroke-width="3.5"/><path d="M2210.0 871.7 C2213.6 871.2 2224.8 869.6 2231.3 869.0 C2237.9 868.4 2242.7 867.8 2249.4 868.0 C2256.2 868.2 2264.7 868.9 2271.7 870.3 C2278.8 871.7 2283.6 873.0 2291.9 876.6 C2300.3 880.1 2316.8 889.1 2321.8 891.6" fill="none" stroke="#f2a45a" stroke-width="3.5"/><path d="M2257.9 879.6 C2258.5 883.1 2260.1 894.0 2261.3 900.3 C2262.5 906.7 2263.5 911.2 2265.1 917.7 C2266.7 924.1 2270.9 932.0 2271.0 939.0 C2271.2 946.0 2267.5 952.7 2266.0 959.5 C2264.5 966.2 2262.6 976.1 2261.9 979.4" fill="none" stroke="#f2a45a" stroke-width="3.5"/><path d="M2210.0 1039.3 C2215.6 1041.5 2234.1 1051.0 2243.7 1052.4 C2253.3 1053.8 2260.1 1048.3 2267.8 1047.7 C2275.5 1047.2 2282.7 1048.5 2289.7 1049.1 C2296.7 1049.7 2306.4 1050.9 2309.8 1051.3" fill="none" stroke="#f2a45a" stroke-width="3.5"/><path d="M2249.9 1079.2 C2253.5 1077.5 2264.7 1071.9 2271.4 1068.9 C2278.0 1065.8 2283.4 1062.6 2289.7 1061.0 C2296.1 1059.4 2302.9 1059.3 2309.5 1059.2 C2316.2 1059.2 2323.7 1057.2 2329.8 1060.7 C2336.0 1064.2 2341.2 1073.9 2346.5 1080.3 C2351.8 1086.7 2359.2 1096.1 2361.7 1099.2" fill="none" stroke="#f2a45a" stroke-width="3.5"/><path d="M2483.9 616.2 C2487.1 615.9 2496.3 614.2 2503.0 614.2 C2509.6 614.3 2517.0 615.9 2523.8 616.5 C2530.6 617.0 2537.6 617.7 2543.7 617.4 C2549.8 617.2 2554.4 615.0 2560.4 615.0 C2566.4 615.0 2573.3 617.7 2579.8 617.6 C2586.3 617.5 2592.5 614.6 2599.5 614.4 C2606.5 614.2 2615.4 616.1 2621.9 616.5 C2628.4 617.0 2631.9 616.6 2638.4 617.0 C2644.9 617.5 2654.3 618.1 2660.9 619.1 C2667.4 620.1 2671.2 621.9 2677.5 622.9 C2683.8 624.0 2691.5 624.3 2698.7 625.4 C2705.9 626.5 2713.8 629.2 2720.8 629.4 C2727.8 629.5 2734.3 626.6 2740.6 626.4 C2746.9 626.2 2752.4 627.4 2758.6 628.1 C2764.7 628.7 2770.6 630.1 2777.5 630.1 C2784.4 630.1 2796.2 628.3 2800.0 628.0" fill="none" stroke="#f2a45a" stroke-width="3.5"/><path d="M2523.0 667.1 C2523.9 664.1 2526.5 654.9 2528.5 649.1 C2530.6 643.3 2532.6 637.5 2535.2 632.1 C2537.8 626.7 2541.3 622.4 2544.1 616.5 C2547.0 610.5 2549.7 603.0 2552.4 596.3 C2555.0 589.6 2556.6 582.5 2560.1 576.3 C2563.7 570.0 2569.7 565.4 2573.5 558.9 C2577.4 552.3 2580.5 544.0 2583.2 536.9 C2586.0 529.8 2587.1 522.8 2590.1 516.5 C2593.1 510.1 2599.4 501.8 2601.2 498.9" fill="none" stroke="#f2a45a" stroke-width="3.5"/><path d="M2220.0 1059.3 C2216.7 1059.6 2206.7 1060.5 2199.8 1061.4 C2193.0 1062.3 2185.9 1063.7 2179.2 1064.6 C2172.4 1065.4 2165.8 1063.8 2159.3 1066.7 C2152.9 1069.6 2146.7 1076.5 2140.3 1081.9 C2133.9 1087.4 2126.4 1093.4 2120.9 1099.4 C2115.3 1105.5 2110.7 1111.8 2107.1 1118.3 C2103.5 1124.9 2101.6 1132.3 2099.2 1138.7 C2096.8 1145.2 2095.1 1150.5 2092.7 1157.0 C2090.3 1163.5 2087.0 1171.3 2084.8 1177.7 C2082.5 1184.0 2080.1 1192.1 2079.1 1195.0" fill="none" stroke="#f2a45a" stroke-width="3.5"/><path d="M2220.0 709.9 C2217.1 707.2 2208.0 699.1 2202.8 693.3 C2197.6 687.5 2194.7 679.5 2188.8 675.2 C2183.0 670.8 2174.5 669.9 2167.8 666.9 C2161.0 663.8 2155.0 661.5 2148.2 656.9 C2141.4 652.3 2133.4 644.7 2126.9 639.3 C2120.4 633.8 2112.2 626.5 2109.3 623.9" fill="none" stroke="#f2a45a" stroke-width="3.5"/><path d="M2446.9 905.4 C2449.9 904.2 2459.1 900.3 2465.3 898.3 C2471.5 896.3 2477.9 893.5 2484.0 893.4 C2490.1 893.2 2495.5 896.0 2501.9 897.6 C2508.3 899.3 2515.9 902.9 2522.4 903.1 C2528.9 903.4 2534.8 900.2 2540.9 899.0 C2547.1 897.9 2553.4 897.3 2559.4 896.0 C2565.4 894.7 2570.3 892.7 2576.8 891.4 C2583.3 890.2 2591.4 888.2 2598.3 888.6 C2605.1 889.0 2611.6 892.0 2617.7 894.0 C2623.8 895.9 2632.0 899.3 2634.9 900.3" fill="none" stroke="#f2a45a" stroke-width="3.5"/><path d="M2482.4 895.2 C2483.0 900.9 2483.0 917.3 2485.8 929.0 C2488.5 940.8 2494.4 956.2 2498.9 965.8 C2503.5 975.4 2510.6 983.2 2512.9 986.7" fill="none" stroke="#f2a45a" stroke-width="3.5"/><path d="M2520.5 902.9 C2521.1 906.4 2522.9 916.8 2524.0 923.9 C2525.1 931.0 2523.3 938.0 2527.1 945.3 C2530.9 952.6 2541.5 960.1 2546.8 967.4 C2552.0 974.7 2556.7 985.6 2558.7 989.2" fill="none" stroke="#f2a45a" stroke-width="3.5"/><path d="M2596.8 890.2 C2596.0 895.0 2591.3 909.8 2592.3 919.0 C2593.2 928.1 2597.4 938.8 2602.4 945.0 C2607.4 951.2 2618.9 954.3 2622.2 956.2" fill="none" stroke="#f2a45a" stroke-width="3.5"/><path d="M2452.0 943.5 C2456.9 942.9 2472.2 939.5 2481.5 939.8 C2490.9 940.1 2499.5 945.7 2508.2 945.3 C2516.9 944.8 2525.9 938.8 2533.5 936.9 C2541.2 935.0 2547.6 935.1 2554.1 933.9 C2560.7 932.6 2565.5 927.3 2572.9 929.3 C2580.2 931.2 2591.0 944.0 2598.1 945.6 C2605.2 947.2 2609.3 940.0 2615.3 938.9 C2621.4 937.8 2628.1 938.9 2634.3 939.1 C2640.6 939.2 2646.3 939.6 2652.7 939.9 C2659.2 940.2 2669.6 940.8 2673.0 941.0" fill="none" stroke="#f2a45a" stroke-width="3.5"/><path d="M2571.4 930.8 C2572.3 935.0 2574.9 948.5 2577.2 956.1 C2579.5 963.6 2579.6 972.3 2585.1 976.2 C2590.6 980.2 2601.7 981.4 2610.3 979.9 C2618.8 978.4 2627.7 970.0 2636.3 967.3 C2645.0 964.5 2654.7 964.2 2662.1 963.5 C2669.6 962.7 2675.4 962.7 2681.3 962.7 C2687.2 962.6 2691.3 963.6 2697.5 963.2 C2703.7 962.7 2711.7 961.5 2718.6 960.0 C2725.4 958.6 2731.2 955.2 2738.4 954.4 C2745.6 953.6 2753.7 955.8 2761.8 955.3 C2770.0 954.7 2783.1 951.8 2787.3 951.1" fill="none" stroke="#f2a45a" stroke-width="3.5"/><path d="M2660.3 961.3 C2662.5 956.2 2669.5 940.6 2673.4 931.0 C2677.4 921.4 2679.7 912.3 2683.9 903.8 C2688.0 895.3 2696.0 884.0 2698.4 880.0" fill="none" stroke="#f2a45a" stroke-width="3.5"/><path d="M2736.5 956.2 C2738.5 952.3 2743.7 941.2 2748.2 932.5 C2752.7 923.9 2757.8 913.0 2763.4 904.2 C2769.1 895.4 2779.1 884.0 2782.2 880.0" fill="none" stroke="#f2a45a" stroke-width="3.5"/><path d="M2736.5 895.2 C2741.0 898.7 2755.3 911.0 2763.8 916.1 C2772.2 921.1 2783.4 924.1 2787.3 925.7" fill="none" stroke="#f2a45a" stroke-width="3.5"/><path d="M2584.1 1022.3 C2587.3 1022.6 2597.3 1024.0 2603.6 1024.3 C2609.8 1024.7 2616.2 1022.4 2621.5 1024.2 C2626.8 1026.1 2631.2 1029.9 2635.6 1035.5 C2639.9 1041.1 2645.6 1054.1 2647.6 1057.8" fill="none" stroke="#f2a45a" stroke-width="3.5"/><path d="M2546.0 1057.8 C2548.0 1060.3 2553.9 1067.6 2557.9 1072.9 C2562.0 1078.1 2566.1 1084.1 2570.3 1089.4 C2574.4 1094.7 2576.3 1101.9 2582.7 1104.8 C2589.0 1107.7 2599.9 1101.9 2608.6 1106.8 C2617.3 1111.6 2630.5 1129.5 2634.9 1134.1" fill="none" stroke="#f2a45a" stroke-width="3.5"/><path d="M2180.7 418.6 C2178.6 425.1 2173.7 443.0 2168.2 457.6 C2162.7 472.2 2156.0 491.1 2147.4 506.1 C2138.9 521.2 2124.9 531.7 2117.1 548.0 C2109.4 564.2 2103.6 594.4 2100.9 603.7" fill="none" stroke="#f9d29a" stroke-width="3"/><path d="M2531.1 739.7 C2536.1 742.5 2551.0 749.6 2561.2 756.2 C2571.3 762.8 2583.9 769.4 2592.0 779.3 C2600.1 789.2 2603.1 805.8 2609.8 815.4 C2616.5 825.0 2628.6 833.3 2632.3 836.9" fill="none" stroke="#f9d29a" stroke-width="3"/><path d="M2149.6 694.3 C2144.7 702.7 2130.0 729.7 2120.4 745.0 C2110.9 760.3 2100.4 772.9 2092.4 786.3 C2084.4 799.6 2079.8 809.6 2072.5 825.3 C2065.2 841.0 2052.6 871.1 2048.6 880.3" fill="none" stroke="#f9d29a" stroke-width="3"/><path d="M2642.0 438.9 C2646.7 440.7 2663.6 445.0 2670.6 449.6 C2677.6 454.1 2677.1 460.7 2684.2 466.2 C2691.2 471.8 2702.8 477.3 2712.9 482.8 C2723.1 488.2 2739.8 496.2 2745.2 498.9" fill="none" stroke="#f9d29a" stroke-width="3"/><path d="M2169.0 430.7 C2171.0 434.5 2177.5 444.8 2181.0 453.0 C2184.5 461.3 2185.4 474.4 2190.2 480.1 C2195.0 485.9 2205.9 482.5 2210.0 487.4 C2214.1 492.3 2213.8 505.8 2214.6 509.5" fill="none" stroke="#f9d29a" stroke-width="3"/><path d="M2414.7 431.4 C2415.2 434.1 2418.9 442.3 2417.3 447.5 C2415.6 452.8 2407.6 455.8 2404.8 462.9 C2402.0 470.0 2400.7 482.0 2400.5 490.0 C2400.3 498.0 2403.0 507.3 2403.5 510.7" fill="none" stroke="#f9d29a" stroke-width="3"/><path d="M2304.3 780.4 C2298.8 779.5 2284.4 775.5 2271.4 774.9 C2258.5 774.4 2239.6 776.2 2226.6 777.3 C2213.5 778.4 2203.1 778.2 2193.1 781.5 C2183.1 784.8 2171.2 794.6 2166.8 797.2" fill="none" stroke="#f9d29a" stroke-width="3"/><path d="M2675.4 512.1 C2676.2 519.7 2675.2 540.8 2680.6 557.9 C2686.0 575.0 2702.8 597.3 2707.8 614.5 C2712.7 631.7 2705.3 645.9 2710.4 660.9 C2715.5 675.9 2733.8 697.1 2738.5 704.3" fill="none" stroke="#f9d29a" stroke-width="3"/><path d="M2168.2 679.3 C2172.5 682.0 2185.4 687.9 2194.1 695.8 C2202.7 703.7 2212.5 717.5 2220.1 726.6 C2227.7 735.7 2232.6 743.6 2239.8 750.5 C2247.1 757.4 2259.5 765.1 2263.5 768.0" fill="none" stroke="#f9d29a" stroke-width="3"/><path d="M2094.2 665.3 C2097.0 669.2 2103.8 682.7 2110.9 689.2 C2118.0 695.7 2129.8 698.1 2136.6 704.1 C2143.5 710.0 2146.3 717.7 2151.9 725.0 C2157.6 732.3 2167.4 744.1 2170.4 747.9" fill="none" stroke="#f9d29a" stroke-width="3"/><path d="M2034.4 507.7 C2039.2 508.7 2050.6 512.9 2063.3 513.9 C2076.0 514.9 2095.5 510.1 2110.4 513.9 C2125.4 517.6 2141.2 531.0 2153.0 536.2 C2164.9 541.4 2176.7 543.6 2181.5 545.1" fill="none" stroke="#f9d29a" stroke-width="3"/><path d="M2091.8 514.6 C2091.5 520.0 2094.3 538.1 2090.0 547.1 C2085.6 556.1 2072.1 558.1 2065.6 568.5 C2059.1 578.9 2055.2 598.9 2051.1 609.5 C2047.1 620.0 2043.0 628.1 2041.4 631.8" fill="none" stroke="#f9d29a" stroke-width="3"/><path d="M2383.6 827.0 C2392.0 827.6 2417.9 826.4 2433.9 830.5 C2449.9 834.6 2465.4 848.4 2479.6 851.8 C2493.8 855.2 2504.5 848.8 2519.1 850.9 C2533.8 853.0 2559.3 862.3 2567.4 864.5" fill="none" stroke="#f9d29a" stroke-width="3"/><path d="M2294.6 425.9 C2291.6 429.6 2281.5 441.1 2276.8 447.9 C2272.1 454.6 2269.7 461.0 2266.3 466.4 C2263.0 471.9 2259.1 473.0 2256.7 480.7 C2254.4 488.3 2253.0 506.9 2252.3 512.2" fill="none" stroke="#f2a45a" stroke-width="3.2"/><path d="M2206.4 653.8 C2202.9 658.9 2189.4 674.0 2185.4 684.4 C2181.4 694.8 2185.9 705.7 2182.2 716.2 C2178.5 726.6 2168.1 737.9 2163.1 746.9 C2158.1 756.0 2154.0 766.7 2152.2 770.6" fill="none" stroke="#f2a45a" stroke-width="3.2"/><path d="M2146.8 714.5 C2141.8 719.4 2126.4 735.3 2116.5 744.0 C2106.5 752.7 2095.9 757.6 2087.2 766.9 C2078.4 776.2 2073.3 790.8 2063.8 799.7 C2054.4 808.7 2036.1 816.9 2030.5 820.3" fill="none" stroke="#f2a45a" stroke-width="3.2"/><path d="M2107.7 435.9 C2111.5 444.3 2123.5 470.7 2130.7 486.3 C2137.8 501.9 2146.0 516.2 2150.5 529.4 C2154.9 542.7 2153.4 551.2 2157.3 565.7 C2161.3 580.3 2171.3 608.2 2174.1 616.7" fill="none" stroke="#f2a45a" stroke-width="3.2"/><path d="M2429.3 705.9 C2427.4 709.0 2422.7 719.5 2417.6 724.6 C2412.4 729.7 2404.3 730.9 2398.5 736.6 C2392.7 742.3 2387.2 753.5 2382.5 758.7 C2377.8 764.0 2372.5 766.5 2370.5 768.1" fill="none" stroke="#f2a45a" stroke-width="3.2"/><path d="M2388.4 405.5 C2380.0 408.3 2353.1 415.1 2338.0 422.1 C2322.9 429.1 2310.6 439.7 2297.8 447.5 C2285.0 455.2 2276.9 459.2 2261.3 468.6 C2245.7 478.0 2213.7 498.1 2204.1 504.0" fill="none" stroke="#f2a45a" stroke-width="3.2"/><path d="M2365.4 459.0 C2358.5 463.4 2339.2 477.1 2323.8 485.5 C2308.4 494.0 2288.1 502.3 2273.2 509.6 C2258.3 517.0 2248.4 520.9 2234.2 529.5 C2219.9 538.1 2195.5 555.9 2187.8 561.1" fill="none" stroke="#f2a45a" stroke-width="3.2"/><path d="M2648.7 582.7 C2647.5 589.5 2646.6 611.1 2641.6 623.6 C2636.6 636.1 2627.4 644.7 2618.7 657.7 C2610.0 670.8 2597.1 687.9 2589.2 701.7 C2581.3 715.6 2574.3 734.4 2571.3 740.9" fill="none" stroke="#f2a45a" stroke-width="3.2"/><path d="M2261.4 684.3 C2263.3 686.4 2268.2 693.7 2273.0 697.0 C2277.8 700.3 2283.2 703.4 2290.2 704.2 C2297.2 705.0 2309.5 700.6 2315.2 701.8 C2321.0 703.0 2323.2 709.7 2324.7 711.3" fill="none" stroke="#f2a45a" stroke-width="3.2"/><path d="M2388.0 345.5 C2389.3 348.9 2392.0 357.7 2395.5 365.4 C2399.0 373.1 2407.1 383.3 2409.1 391.8 C2411.1 400.2 2406.4 407.2 2407.5 416.2 C2408.6 425.1 2414.5 440.6 2415.9 445.5" fill="none" stroke="#f2a45a" stroke-width="3.2"/><path d="M2355.1 599.1 C2356.3 605.4 2361.6 621.1 2362.3 637.3 C2363.0 653.6 2358.7 680.7 2359.5 696.4 C2360.3 712.1 2367.4 716.9 2367.3 731.6 C2367.3 746.3 2360.5 775.8 2359.1 784.6" fill="none" stroke="#f2a45a" stroke-width="3.2"/><path d="M2407.3 658.7 C2400.8 658.6 2382.9 658.4 2368.0 658.6 C2353.2 658.8 2332.4 660.1 2318.0 659.7 C2303.5 659.3 2295.5 655.6 2281.5 656.4 C2267.4 657.2 2241.8 663.2 2233.8 664.5" fill="none" stroke="#f2a45a" stroke-width="3.2"/><path d="M2379.9 885.4 C2377.1 887.3 2371.2 894.2 2363.2 896.9 C2355.3 899.6 2339.6 897.3 2332.1 901.5 C2324.6 905.8 2326.2 915.0 2318.3 922.4 C2310.5 929.7 2290.6 941.7 2285.1 945.5" fill="none" stroke="#f2a45a" stroke-width="3.2"/><path d="M2139.0 883.6 C2135.7 884.8 2122.3 885.2 2119.2 890.4 C2116.1 895.6 2120.1 907.4 2120.5 915.1 C2121.0 922.8 2121.8 929.3 2122.0 936.7 C2122.2 944.1 2121.4 952.3 2121.6 959.5 C2121.8 966.7 2122.7 973.2 2123.2 979.9 C2123.6 986.6 2123.9 993.1 2124.6 999.6 C2125.2 1006.2 2126.6 1016.1 2127.0 1019.4" fill="none" stroke="#f6c544" stroke-width="3.5"/><path d="M2210.0 712.0 C2213.3 711.7 2222.8 711.1 2229.5 710.6 C2236.3 710.1 2243.8 709.0 2250.4 709.0 C2257.0 708.9 2262.4 710.3 2268.9 710.3 C2275.4 710.3 2282.3 709.6 2289.3 709.0 C2296.3 708.4 2304.4 707.6 2310.9 706.9 C2317.5 706.2 2322.1 705.3 2328.7 704.8 C2335.4 704.3 2344.0 704.0 2350.9 703.8 C2357.7 703.7 2363.4 704.3 2369.7 704.1 C2375.9 703.9 2382.0 703.2 2388.5 702.9 C2395.0 702.6 2401.7 702.5 2408.6 702.1 C2415.4 701.7 2422.8 700.9 2429.6 700.6 C2436.4 700.2 2446.2 700.1 2449.5 700.0" fill="none" stroke="#f6c544" stroke-width="3.5"/><path d="M2417.6 751.9 C2420.1 753.5 2427.5 758.4 2432.6 761.6 C2437.8 764.7 2442.6 765.5 2448.6 770.7 C2454.6 776.0 2468.2 788.6 2468.7 792.9 C2469.2 797.3 2457.4 795.8 2451.5 797.0 C2445.7 798.1 2436.5 799.3 2433.6 799.8" fill="none" stroke="#f6c544" stroke-width="3.5"/><path d="M2553.3 975.4 C2556.1 976.7 2563.8 980.6 2569.8 982.8 C2575.8 984.9 2580.6 988.8 2589.2 988.3 C2597.8 987.8 2613.9 983.4 2621.4 980.0 C2628.9 976.7 2629.9 972.4 2634.3 968.2 C2638.8 964.0 2642.5 958.3 2648.1 954.8 C2653.6 951.3 2660.8 949.8 2667.7 947.2 C2674.5 944.5 2681.3 941.4 2689.1 938.9 C2696.8 936.4 2706.2 934.2 2714.2 932.3 C2722.1 930.4 2733.1 928.3 2736.9 927.5" fill="none" stroke="#f6c544" stroke-width="3.5"/><path d="M2589.2 1079.2 C2592.6 1080.8 2602.7 1085.0 2609.4 1088.4 C2616.1 1091.9 2624.1 1094.5 2629.4 1100.1 C2634.8 1105.6 2641.8 1115.3 2641.8 1121.8 C2641.7 1128.4 2631.3 1136.2 2629.2 1139.1" fill="none" stroke="#f6c544" stroke-width="3.5"/><path d="M2609.2 1039.3 C2612.4 1042.7 2621.5 1053.2 2628.4 1059.6 C2635.3 1066.0 2643.8 1069.9 2650.6 1077.9 C2657.4 1085.8 2666.0 1102.3 2669.1 1107.2" fill="none" stroke="#f6c544" stroke-width="3.5"/><path d="M2529.4 1083.2 C2532.7 1081.3 2543.0 1075.8 2549.7 1071.8 C2556.3 1067.8 2566.0 1061.4 2569.3 1059.3" fill="none" stroke="#f6c544" stroke-width="3.5"/><path d="M2196.8 703.6 C2200.0 703.9 2209.6 704.6 2215.8 705.4 C2222.0 706.1 2227.8 707.4 2233.9 708.0 C2239.9 708.6 2245.4 708.5 2252.3 708.9 C2259.1 709.2 2267.6 710.0 2274.9 710.1 C2282.2 710.1 2288.7 709.0 2295.9 709.1 C2303.1 709.3 2310.3 711.4 2318.0 711.1 C2325.7 710.7 2334.3 708.1 2341.9 707.0 C2349.5 706.0 2356.2 705.5 2363.5 704.8 C2370.7 704.0 2376.2 703.8 2385.6 702.7 C2395.0 701.6 2410.5 697.4 2419.9 698.2 C2429.2 699.1 2435.0 704.7 2441.7 707.8 C2448.4 711.0 2457.0 715.6 2460.0 717.1" fill="none" stroke="#f6c544" stroke-width="3.5"/><path d="M2244.2 751.0 L2251.0 784.9" fill="none" stroke="#f6c544" stroke-width="3.5"/><path d="M2400.1 744.2 C2403.4 748.2 2413.5 762.4 2420.3 767.9 C2427.1 773.5 2434.4 774.8 2441.0 777.6 C2447.7 780.5 2456.9 783.7 2460.0 784.9" fill="none" stroke="#f6c544" stroke-width="3.5"/><path d="M2213.7 676.5 L2217.1 703.6" fill="none" stroke="#f6c544" stroke-width="3.5"/><path d="M2553.6 981.6 C2556.7 984.2 2565.1 993.8 2572.1 997.3 C2579.2 1000.7 2587.3 1003.5 2595.9 1002.3 C2604.4 1001.1 2614.8 996.4 2623.2 990.1 C2631.6 983.8 2639.2 970.5 2646.4 964.5 C2653.5 958.5 2659.4 956.9 2666.2 953.9 C2673.0 950.9 2680.9 949.2 2687.1 946.6 C2693.3 944.0 2697.8 940.3 2703.4 938.2 C2708.9 936.1 2715.0 935.9 2720.6 933.8 C2726.1 931.7 2733.8 927.1 2736.5 925.7" fill="none" stroke="#f6c544" stroke-width="3.5"/><path d="M2609.5 1090.9 C2611.8 1094.0 2619.0 1103.7 2623.4 1109.4 C2627.8 1115.0 2634.8 1119.0 2635.9 1124.8 C2636.9 1130.6 2630.8 1141.0 2629.8 1144.2" fill="none" stroke="#f6c544" stroke-width="3.5"/><rect x="1753" y="283" width="48" height="20" fill="#3aa58a"/><rect x="1753" y="283" width="48" height="3" fill="#e05050"/><rect x="1763" y="293.0" width="28" height="2" fill="#a8dccb"/><rect x="2047" y="224" width="49" height="8" fill="#3aa58a"/><rect x="2047" y="224" width="49" height="3" fill="#3aa58a"/><rect x="2233" y="625" width="52" height="16" fill="#3aa58a"/><rect x="2233" y="625" width="52" height="3" fill="#e05050"/><rect x="2243" y="633.0" width="32" height="2" fill="#a8dccb"/><rect x="2027" y="766" width="57" height="18" fill="#3aa58a"/><rect x="2027" y="766" width="57" height="3" fill="#e05050"/><rect x="2037" y="775.0" width="37" height="2" fill="#a8dccb"/><rect x="2382" y="808" width="48" height="19" fill="#3aa58a"/><rect x="2382" y="808" width="48" height="3" fill="#e05050"/><rect x="2392" y="817.5" width="28" height="2" fill="#a8dccb"/><rect x="2659" y="472" width="46" height="16" fill="#3aa58a"/><rect x="2659" y="472" width="46" height="3" fill="#e0b030"/><rect x="2669" y="480.0" width="26" height="2" fill="#a8dccb"/><rect x="2765" y="515" width="35" height="19" fill="#3aa58a"/><rect x="2765" y="515" width="35" height="3" fill="#e05050"/><rect x="2775" y="524.5" width="15" height="2" fill="#a8dccb"/><rect x="1836" y="1079" width="49" height="18" fill="#3aa58a"/><rect x="1836" y="1079" width="49" height="3" fill="#e05050"/><rect x="1846" y="1088.0" width="29" height="2" fill="#a8dccb"/><rect x="1717" y="708" width="58" height="18" fill="#e8605a"/><circle cx="2124" cy="438" r="5.5" fill="#e4573f"/><circle cx="2217" cy="708" r="5.5" fill="#e4573f"/><circle cx="2739" cy="716" r="5.5" fill="#e4573f"/><circle cx="1855" cy="749" r="5.5" fill="#e4573f"/><circle cx="2152" cy="761" r="5.5" fill="#e4573f"/><circle cx="2439" cy="761" r="5.5" fill="#e4573f"/><circle cx="1664" cy="812" r="5.5" fill="#e4573f"/><circle cx="2558" cy="975" r="5.5" fill="#e4573f"/><circle cx="2136" cy="979" r="5.5" fill="#e4573f"/><circle cx="2275" cy="1010" r="5.5" fill="#e4573f"/><circle cx="2358" cy="1128" r="5.5" fill="#e4573f"/><circle cx="2643" cy="1129" r="5.5" fill="#e4573f"/><circle cx="2346" cy="1185" r="5.5" fill="#e4573f"/><text x="1731" y="324" font-size="24" fill="#767a84" text-anchor="middle" dominant-baseline="central" stroke="#f4f6fa" stroke-width="4" paint-order="stroke">怀集县</text><text x="2037" y="349" font-size="24" fill="#767a84" text-anchor="middle" dominant-baseline="central" stroke="#f4f6fa" stroke-width="4" paint-order="stroke">清新区</text><text x="2339" y="341" font-size="24" fill="#767a84" text-anchor="middle" dominant-baseline="central" stroke="#f4f6fa" stroke-width="4" paint-order="stroke">佛冈县</text><text x="2641" y="250" font-size="24" fill="#767a84" text-anchor="middle" dominant-baseline="central" stroke="#f4f6fa" stroke-width="4" paint-order="stroke">新丰县</text><text x="2125" y="416" font-size="24" fill="#767a84" text-anchor="middle" dominant-baseline="central" stroke="#f4f6fa" stroke-width="4" paint-order="stroke">清远</text><text x="1845" y="460" font-size="24" fill="#767a84" text-anchor="middle" dominant-baseline="central" stroke="#f4f6fa" stroke-width="4" paint-order="stroke">广宁县</text><text x="2663" y="416" font-size="24" fill="#767a84" text-anchor="middle" dominant-baseline="central" stroke="#f4f6fa" stroke-width="4" paint-order="stroke">龙门县</text><text x="2364" y="504" font-size="24" fill="#767a84" text-anchor="middle" dominant-baseline="central" stroke="#f4f6fa" stroke-width="4" paint-order="stroke">从化区</text><text x="2198" y="573" font-size="24" fill="#767a84" text-anchor="middle" dominant-baseline="central" stroke="#f4f6fa" stroke-width="4" paint-order="stroke">花都区</text><text x="1976" y="612" font-size="24" fill="#767a84" text-anchor="middle" dominant-baseline="central" stroke="#f4f6fa" stroke-width="4" paint-order="stroke">四会</text><text x="2465" y="645" font-size="24" fill="#767a84" text-anchor="middle" dominant-baseline="central" stroke="#f4f6fa" stroke-width="4" paint-order="stroke">增城区</text><text x="1900" y="694" font-size="24" fill="#767a84" text-anchor="middle" dominant-baseline="central" stroke="#f4f6fa" stroke-width="4" paint-order="stroke">鼎湖区</text><text x="2050" y="696" font-size="24" fill="#767a84" text-anchor="middle" dominant-baseline="central" stroke="#f4f6fa" stroke-width="4" paint-order="stroke">三水区</text><text x="2744" y="696" font-size="24" fill="#767a84" text-anchor="middle" dominant-baseline="central" stroke="#f4f6fa" stroke-width="4" paint-order="stroke">惠州</text><text x="1855" y="728" font-size="24" fill="#767a84" text-anchor="middle" dominant-baseline="central" stroke="#f4f6fa" stroke-width="4" paint-order="stroke">肇庆</text><text x="2146" y="738" font-size="24" fill="#767a84" text-anchor="middle" dominant-baseline="central" stroke="#f4f6fa" stroke-width="4" paint-order="stroke">佛山</text><text x="2225" y="732" font-size="24" fill="#767a84" text-anchor="middle" dominant-baseline="central" stroke="#f4f6fa" stroke-width="4" paint-order="stroke">海珠区</text><text x="2440" y="740" font-size="24" fill="#767a84" text-anchor="middle" dominant-baseline="central" stroke="#f4f6fa" stroke-width="4" paint-order="stroke">东莞</text><text x="1665" y="736" font-size="24" fill="#767a84" text-anchor="middle" dominant-baseline="central" stroke="#f4f6fa" stroke-width="4" paint-order="stroke">德区</text><text x="1668" y="789" font-size="24" fill="#767a84" text-anchor="middle" dominant-baseline="central" stroke="#f4f6fa" stroke-width="4" paint-order="stroke">云浮</text><text x="2267" y="805" font-size="24" fill="#767a84" text-anchor="middle" dominant-baseline="central" stroke="#f4f6fa" stroke-width="4" paint-order="stroke">番禺区</text><text x="2049" y="823" font-size="24" fill="#767a84" text-anchor="middle" dominant-baseline="central" stroke="#f4f6fa" stroke-width="4" paint-order="stroke">高明区</text><text x="2234" y="870" font-size="24" fill="#767a84" text-anchor="middle" dominant-baseline="central" stroke="#f4f6fa" stroke-width="4" paint-order="stroke">顺德区</text><text x="2339" y="870" font-size="24" fill="#767a84" text-anchor="middle" dominant-baseline="central" stroke="#f4f6fa" stroke-width="4" paint-order="stroke">南沙区</text><text x="2754" y="878" font-size="24" fill="#767a84" text-anchor="middle" dominant-baseline="central" stroke="#f4f6fa" stroke-width="4" paint-order="stroke">惠阳区</text><text x="2074" y="889" font-size="24" fill="#767a84" text-anchor="middle" dominant-baseline="central" stroke="#f4f6fa" stroke-width="4" paint-order="stroke">鹤山</text><text x="1746" y="920" font-size="24" fill="#767a84" text-anchor="middle" dominant-baseline="central" stroke="#f4f6fa" stroke-width="4" paint-order="stroke">新兴县</text><text x="2663" y="910" font-size="24" fill="#767a84" text-anchor="middle" dominant-baseline="central" stroke="#f4f6fa" stroke-width="4" paint-order="stroke">龙岗区</text><text x="2543" y="953" font-size="24" fill="#767a84" text-anchor="middle" dominant-baseline="central" stroke="#f4f6fa" stroke-width="4" paint-order="stroke">深圳</text><text x="2140" y="958" font-size="24" fill="#767a84" text-anchor="middle" dominant-baseline="central" stroke="#f4f6fa" stroke-width="4" paint-order="stroke">江门</text><text x="2260" y="988" font-size="24" fill="#767a84" text-anchor="middle" dominant-baseline="central" stroke="#f4f6fa" stroke-width="4" paint-order="stroke">中山</text><text x="2521" y="1002" font-size="24" fill="#767a84" text-anchor="middle" dominant-baseline="central" stroke="#f4f6fa" stroke-width="4" paint-order="stroke">南山区</text><text x="2655" y="991" font-size="24" fill="#767a84" text-anchor="middle" dominant-baseline="central" stroke="#f4f6fa" stroke-width="4" paint-order="stroke">盐田区</text><text x="2073" y="1037" font-size="24" fill="#767a84" text-anchor="middle" dominant-baseline="central" stroke="#f4f6fa" stroke-width="4" paint-order="stroke">新会区</text><text x="2566" y="1045" font-size="24" fill="#767a84" text-anchor="middle" dominant-baseline="central" stroke="#f4f6fa" stroke-width="4" paint-order="stroke">元朗区</text><text x="1965" y="1077" font-size="24" fill="#767a84" text-anchor="middle" dominant-baseline="central" stroke="#f4f6fa" stroke-width="4" paint-order="stroke">开平</text><text x="2636" y="1074" font-size="24" fill="#767a84" text-anchor="middle" dominant-baseline="central" stroke="#f4f6fa" stroke-width="4" paint-order="stroke">沙田区</text><text x="2340" y="1105" font-size="24" fill="#767a84" text-anchor="middle" dominant-baseline="central" stroke="#f4f6fa" stroke-width="4" paint-order="stroke">珠海</text><text x="2526" y="1125" font-size="24" fill="#767a84" text-anchor="middle" dominant-baseline="central" stroke="#f4f6fa" stroke-width="4" paint-order="stroke">离岛区</text><text x="1983" y="1139" font-size="24" fill="#767a84" text-anchor="middle" dominant-baseline="central" stroke="#f4f6fa" stroke-width="4" paint-order="stroke">台山</text><text x="2231" y="1158" font-size="24" fill="#767a84" text-anchor="middle" dominant-baseline="central" stroke="#f4f6fa" stroke-width="4" paint-order="stroke">斗门区</text><text x="1786" y="1170" font-size="24" fill="#767a84" text-anchor="middle" dominant-baseline="central" stroke="#f4f6fa" stroke-width="4" paint-order="stroke">恩平</text><text x="2221" y="686" font-size="31" font-weight="bold" fill="#333" text-anchor="middle" dominant-baseline="central" stroke="#f4f6fa" stroke-width="4" paint-order="stroke">广州</text><text x="2676" y="1129" font-size="31" font-weight="bold" fill="#333" text-anchor="middle" dominant-baseline="central" stroke="#f4f6fa" stroke-width="4" paint-order="stroke">香港</text><rect x="2703" y="252" width="72" height="72" fill="#000" opacity="0.06" transform="translate(0,4)"/><rect x="2702" y="250" width="73" height="73" fill="#fff"/><g fill="none" stroke="#4a86d4" stroke-width="3.5"><rect x="2726" y="282" width="22" height="13" rx="6" transform="rotate(-40 2737 288)"/><rect x="2732" y="276" width="22" height="13" rx="6" transform="rotate(-40 2743 282)"/></g></svg>
<svg class="a" style="left:0;top:0" width="4000" height="1925" font-family="Liberation Sans, sans-serif"><path d="M3364.3 949.8 A201 201 0 0 1 3364.3 552.2" fill="none" stroke="#f0a04b" stroke-width="33" stroke-linecap="round"/><path d="M3423.7 552.2 A201 201 0 0 1 3423.7 949.8" fill="none" stroke="#ea6365" stroke-width="33" stroke-linecap="round"/><text x="3394" y="733" font-size="43" fill="#3a88d4" text-anchor="middle" font-weight="bold" dominant-baseline="central" >1</text><text x="3394" y="799" font-size="41" fill="#3a8ad6" text-anchor="middle" font-weight="normal" dominant-baseline="central" >隐患数</text><text x="3092" y="731" font-size="24" fill="#f3b27a" text-anchor="end" font-weight="normal" dominant-baseline="central" >整改中：1</text><text x="3092" y="765" font-size="24" fill="#f3b27a" text-anchor="end" font-weight="normal" dominant-baseline="central" >占比：50</text><line x1="3101" y1="751" x2="3156" y2="751" stroke="#f6c79c" stroke-width="3"/><text x="3695" y="731" font-size="24" fill="#ee8a8c" text-anchor="start" font-weight="normal" dominant-baseline="central" >未按期整改：1</text><text x="3708" y="765" font-size="24" fill="#ee8a8c" text-anchor="start" font-weight="normal" dominant-baseline="central" >占比：50</text><line x1="3632" y1="751" x2="3686" y2="751" stroke="#f2a2a4" stroke-width="3"/><path d="M3394 990 V1011 H3427" fill="none" stroke="#7ab2e6" stroke-width="3"/><text x="3436" y="992" font-size="24" fill="#6aa8e2" text-anchor="start" font-weight="normal" dominant-baseline="central" >已按期整改：0</text><text x="3444" y="1026" font-size="24" fill="#6aa8e2" text-anchor="start" font-weight="normal" dominant-baseline="central" >占比：0%</text><rect x="3118" y="1097" width="51" height="27" rx="4" fill="#ea6365"/><text x="3179" y="1110" font-size="25" fill="#777" text-anchor="start" font-weight="normal" dominant-baseline="central" >未按期整改</text><rect x="3327" y="1097" width="51" height="27" rx="4" fill="#2e7bc4"/><text x="3388" y="1110" font-size="25" fill="#777" text-anchor="start" font-weight="normal" dominant-baseline="central" >已按期整改</text><rect x="3536" y="1097" width="51" height="27" rx="4" fill="#f0a04b"/><text x="3597" y="1110" font-size="25" fill="#777" text-anchor="start" font-weight="normal" dominant-baseline="central" >整改中</text><rect x="1374" y="1348" width="47" height="26" rx="4" fill="#2e7bc4"/><text x="1434" y="1361" font-size="25" fill="#888" text-anchor="start" font-weight="normal" dominant-baseline="central" >一次性检验合格</text><rect x="1634" y="1348" width="47" height="26" rx="4" fill="#3aae3a"/><text x="1694" y="1361" font-size="25" fill="#888" text-anchor="start" font-weight="normal" dominant-baseline="central" >完成工序</text><rect x="1819" y="1348" width="47" height="26" rx="4" fill="#ea6365"/><text x="1880" y="1361" font-size="25" fill="#888" text-anchor="start" font-weight="normal" dominant-baseline="central" >未按期交验</text><text x="779" y="1415" font-size="34" fill="#444" text-anchor="middle" font-weight="bold" dominant-baseline="central" >桥梁工程</text><path d="M789.6 1464.7 A113 113 0 0 1 873.7 1594.8" fill="none" stroke="#2e7bc4" stroke-width="25" stroke-linecap="round"/><path d="M851.6 1644.0 A113 113 0 0 1 664.2 1630.0" fill="none" stroke="#3aae3a" stroke-width="25" stroke-linecap="round"/><path d="M649.7 1578.1 A113 113 0 0 1 735.6 1464.7" fill="none" stroke="#ea6365" stroke-width="25" stroke-linecap="round"/><text x="765.6" y="1549" font-size="42" fill="#2a7bc9" text-anchor="middle" font-weight="bold" dominant-baseline="central" >81.51%</text><text x="765.6" y="1610" font-size="28" fill="#b0b0b0" text-anchor="middle" font-weight="normal" dominant-baseline="central" >一次报验</text><text x="765.6" y="1642" font-size="28" fill="#b0b0b0" text-anchor="middle" font-weight="normal" dominant-baseline="central" >合格率</text><text x="658" y="1732.0" font-size="25" fill="#a8a8a8" text-anchor="start" font-weight="normal" dominant-baseline="central" >完成工序报验</text><text x="826" y="1732.0" font-size="25" fill="#a8a8a8" text-anchor="start" font-weight="normal" dominant-baseline="central" >806</text><text x="658" y="1778.5" font-size="25" fill="#a8a8a8" text-anchor="start" font-weight="normal" dominant-baseline="central" >一次报验合格</text><text x="826" y="1778.5" font-size="25" fill="#a8a8a8" text-anchor="start" font-weight="normal" dominant-baseline="central" >657</text><text x="658" y="1825.0" font-size="25" fill="#a8a8a8" text-anchor="start" font-weight="normal" dominant-baseline="central" >未按期交验</text><text x="826" y="1825.0" font-size="25" fill="#a8a8a8" text-anchor="start" font-weight="normal" dominant-baseline="central" >608</text><text x="1355" y="1415" font-size="34" fill="#444" text-anchor="middle" font-weight="bold" dominant-baseline="central" >路基工程</text><path d="M1365.8 1464.7 A113 113 0 0 1 1451.1 1562.0" fill="none" stroke="#2e7bc4" stroke-width="25" stroke-linecap="round"/><path d="M1444.1 1615.4 A113 113 0 0 1 1315.6 1685.0" fill="none" stroke="#3aae3a" stroke-width="25" stroke-linecap="round"/><path d="M1267.0 1661.7 A113 113 0 0 1 1311.8 1464.7" fill="none" stroke="#ea6365" stroke-width="25" stroke-linecap="round"/><text x="1341.8" y="1549" font-size="42" fill="#2a7bc9" text-anchor="middle" font-weight="bold" dominant-baseline="central" >90.14%</text><text x="1341.8" y="1610" font-size="28" fill="#b0b0b0" text-anchor="middle" font-weight="normal" dominant-baseline="central" >一次报验</text><text x="1341.8" y="1642" font-size="28" fill="#b0b0b0" text-anchor="middle" font-weight="normal" dominant-baseline="central" >合格率</text><text x="1234" y="1732.0" font-size="25" fill="#a8a8a8" text-anchor="start" font-weight="normal" dominant-baseline="central" >完成工序报验</text><text x="1403" y="1732.0" font-size="25" fill="#a8a8a8" text-anchor="start" font-weight="normal" dominant-baseline="central" >365</text><text x="1234" y="1778.5" font-size="25" fill="#a8a8a8" text-anchor="start" font-weight="normal" dominant-baseline="central" >一次报验合格</text><text x="1403" y="1778.5" font-size="25" fill="#a8a8a8" text-anchor="start" font-weight="normal" dominant-baseline="central" >329</text><text x="1234" y="1825.0" font-size="25" fill="#a8a8a8" text-anchor="start" font-weight="normal" dominant-baseline="central" >未按期交验</text><text x="1403" y="1825.0" font-size="25" fill="#a8a8a8" text-anchor="start" font-weight="normal" dominant-baseline="central" >521</text><text x="1935" y="1415" font-size="34" fill="#444" text-anchor="middle" font-weight="bold" dominant-baseline="central" >项目设计要求</text><path d="M1945.7 1464.7 A113 113 0 0 1 1974.4 1476.1" fill="none" stroke="#2e7bc4" stroke-width="25" stroke-linecap="round"/><path d="M2013.6 1513.1 A113 113 0 0 1 2030.5 1590.6" fill="none" stroke="#3aae3a" stroke-width="25" stroke-linecap="round"/><path d="M2010.3 1640.6 A113 113 0 1 1 1891.7 1464.7" fill="none" stroke="#ea6365" stroke-width="25" stroke-linecap="round"/><text x="1921.7" y="1549" font-size="42" fill="#2a7bc9" text-anchor="middle" font-weight="bold" dominant-baseline="central" >63.04%</text><text x="1921.7" y="1610" font-size="28" fill="#b0b0b0" text-anchor="middle" font-weight="normal" dominant-baseline="central" >一次报验</text><text x="1921.7" y="1642" font-size="28" fill="#b0b0b0" text-anchor="middle" font-weight="normal" dominant-baseline="central" >合格率</text><text x="1812" y="1732.0" font-size="25" fill="#a8a8a8" text-anchor="start" font-weight="normal" dominant-baseline="central" >完成工序报验</text><text x="1983" y="1732.0" font-size="25" fill="#a8a8a8" text-anchor="start" font-weight="normal" dominant-baseline="central" >46</text><text x="1812" y="1778.5" font-size="25" fill="#a8a8a8" text-anchor="start" font-weight="normal" dominant-baseline="central" >一次报验合格</text><text x="1983" y="1778.5" font-size="25" fill="#a8a8a8" text-anchor="start" font-weight="normal" dominant-baseline="central" >29</text><text x="1812" y="1825.0" font-size="25" fill="#a8a8a8" text-anchor="start" font-weight="normal" dominant-baseline="central" >未按期交验</text><text x="1983" y="1825.0" font-size="25" fill="#a8a8a8" text-anchor="start" font-weight="normal" dominant-baseline="central" >166</text><circle cx="2137" cy="1608" r="38" fill="#e7e9ed"/><path d="M2132 1598 L2142 1608 L2132 1618" fill="none" stroke="#f6f6f6" stroke-width="3"/><line x1="2337" y1="1789.9" x2="3881" y2="1789.9" stroke="#e9edf5" stroke-width="3"/><line x1="2337" y1="1735.6" x2="3881" y2="1735.6" stroke="#e9edf5" stroke-width="3"/><line x1="2337" y1="1681.2" x2="3881" y2="1681.2" stroke="#e9edf5" stroke-width="3"/><line x1="2337" y1="1626.9" x2="3881" y2="1626.9" stroke="#e9edf5" stroke-width="3"/><line x1="2337" y1="1572.5" x2="3881" y2="1572.5" stroke="#e9edf5" stroke-width="3"/><line x1="2337" y1="1518.2" x2="3881" y2="1518.2" stroke="#e9edf5" stroke-width="3"/><line x1="2337" y1="1463.8" x2="3881" y2="1463.8" stroke="#e9edf5" stroke-width="3"/><text x="2319" y="1841.3" font-size="25" fill="#999" text-anchor="end" font-weight="normal" dominant-baseline="central" >0</text><text x="2319" y="1786.942857142857" font-size="25" fill="#999" text-anchor="end" font-weight="normal" dominant-baseline="central" >50</text><text x="2319" y="1732.5857142857142" font-size="25" fill="#999" text-anchor="end" font-weight="normal" dominant-baseline="central" >100</text><text x="2319" y="1678.2285714285713" font-size="25" fill="#999" text-anchor="end" font-weight="normal" dominant-baseline="central" >150</text><text x="2319" y="1623.8714285714286" font-size="25" fill="#999" text-anchor="end" font-weight="normal" dominant-baseline="central" >200</text><text x="2319" y="1569.5142857142857" font-size="25" fill="#999" text-anchor="end" font-weight="normal" dominant-baseline="central" >250</text><text x="2319" y="1515.1571428571428" font-size="25" fill="#999" text-anchor="end" font-weight="normal" dominant-baseline="central" >300</text><text x="2319" y="1460.8" font-size="25" fill="#999" text-anchor="end" font-weight="normal" dominant-baseline="central" >350</text><text x="2290" y="1406" font-size="25" fill="#888" text-anchor="middle" font-weight="normal" dominant-baseline="central" >数量</text><rect x="3053" y="1339" width="51" height="29" rx="6" fill="url(#gb)"/><text x="3115" y="1353" font-size="25" fill="#888" text-anchor="start" font-weight="normal" dominant-baseline="central" >原材料应检测批次数</text><rect x="3361" y="1339" width="51" height="29" rx="6" fill="url(#gg)"/><text x="3423" y="1353" font-size="25" fill="#888" text-anchor="start" font-weight="normal" dominant-baseline="central" >施工单位检测批次数</text><rect x="3669" y="1339" width="51" height="29" rx="6" fill="url(#gr)"/><text x="3731" y="1353" font-size="25" fill="#888" text-anchor="start" font-weight="normal" dominant-baseline="central" >监理单位抽检批次数</text><defs><linearGradient id="gb" x1="0" y1="0" x2="0" y2="1"><stop offset="0" stop-color="#6bb1e5"/><stop offset="1" stop-color="#2a76c2"/></linearGradient><linearGradient id="gg" x1="0" y1="0" x2="0" y2="1"><stop offset="0" stop-color="#78c066"/><stop offset="1" stop-color="#38a82f"/></linearGradient><linearGradient id="gr" x1="0" y1="0" x2="0" y2="1"><stop offset="0" stop-color="#f07b7b"/><stop offset="1" stop-color="#e85e60"/></linearGradient></defs><path d="M2340.0 1844.3 V1537.7 A31.5 31.5 0 0 1 2403.0 1537.7 V1844.3 Z" fill="url(#gb)"/><text x="2371.5" y="1482.1985714285713" font-size="25" fill="#777" text-anchor="middle" font-weight="normal" dominant-baseline="central" >311</text><path d="M2415.3 1844.3 V1589.9 A31.5 31.5 0 0 1 2478.3 1589.9 V1844.3 Z" fill="url(#gg)"/><text x="2446.8" y="1534.3814285714284" font-size="25" fill="#777" text-anchor="middle" font-weight="normal" dominant-baseline="central" >263</text><path d="M2490.6 1844.3 V1611.6 A31.5 31.5 0 0 1 2553.6 1611.6 V1844.3 Z" fill="url(#gr)"/><text x="2522.1" y="1556.1242857142856" font-size="25" fill="#777" text-anchor="middle" font-weight="normal" dominant-baseline="central" >243</text><text x="2447.285714285714" y="1869" font-size="25" fill="#999" text-anchor="middle" font-weight="normal" dominant-baseline="central" >钢筋</text><path d="M2560.6 1844.3 V1783.4 A31.5 31.5 0 0 1 2623.6 1783.4 V1844.3 Z" fill="url(#gb)"/><text x="2592.0714285714284" y="1727.892857142857" font-size="25" fill="#777" text-anchor="middle" font-weight="normal" dominant-baseline="central" >85</text><path d="M2635.9 1844.3 V1806.2 A31.5 31.5 0 0 1 2698.9 1806.2 V1844.3 Z" fill="url(#gg)"/><text x="2667.3714285714286" y="1750.722857142857" font-size="25" fill="#777" text-anchor="middle" font-weight="normal" dominant-baseline="central" >64</text><path d="M2711.2 1844.3 V1818.2 A31.5 31.5 0 0 1 2774.2 1818.2 V1844.3 Z" fill="url(#gr)"/><text x="2742.6714285714284" y="1762.6814285714286" font-size="25" fill="#777" text-anchor="middle" font-weight="normal" dominant-baseline="central" >53</text><text x="2667.8571428571427" y="1869" font-size="25" fill="#999" text-anchor="middle" font-weight="normal" dominant-baseline="central" >水泥</text><path d="M2781.1 1844.3 A31.5 30.4 0 0 1 2844.1 1844.3 Z" fill="url(#gb)"/><text x="2812.6428571428573" y="1789.86" font-size="25" fill="#777" text-anchor="middle" font-weight="normal" dominant-baseline="central" >28</text><text x="2887.9428571428575" y="1820.3" font-size="25" fill="#777" text-anchor="middle" font-weight="normal" dominant-baseline="central" >0</text><text x="2963.2428571428572" y="1820.3" font-size="25" fill="#777" text-anchor="middle" font-weight="normal" dominant-baseline="central" >0</text><text x="2888.4285714285716" y="1869" font-size="25" fill="#999" text-anchor="middle" font-weight="normal" dominant-baseline="central" >外加剂</text><path d="M3001.7 1844.3 V1574.7 A31.5 31.5 0 0 1 3064.7 1574.7 V1844.3 Z" fill="url(#gb)"/><text x="3033.214285714286" y="1519.1614285714286" font-size="25" fill="#777" text-anchor="middle" font-weight="normal" dominant-baseline="central" >277</text><path d="M3077.0 1844.3 V1659.5 A31.5 31.5 0 0 1 3140.0 1659.5 V1844.3 Z" fill="url(#gg)"/><text x="3108.514285714286" y="1603.9585714285713" font-size="25" fill="#777" text-anchor="middle" font-weight="normal" dominant-baseline="central" >199</text><path d="M3152.3 1844.3 V1734.5 A31.5 31.5 0 0 1 3215.3 1734.5 V1844.3 Z" fill="url(#gr)"/><text x="3183.8142857142857" y="1678.9714285714285" font-size="25" fill="#777" text-anchor="middle" font-weight="normal" dominant-baseline="central" >130</text><text x="3109.0" y="1869" font-size="25" fill="#999" text-anchor="middle" font-weight="normal" dominant-baseline="central" >粗集料(碎石、卵石)</text><path d="M3222.3 1844.3 V1773.6 A31.5 31.5 0 0 1 3285.3 1773.6 V1844.3 Z" fill="url(#gb)"/><text x="3253.785714285714" y="1718.1085714285714" font-size="25" fill="#777" text-anchor="middle" font-weight="normal" dominant-baseline="central" >94</text><path d="M3297.6 1844.3 V1785.6 A31.5 31.5 0 0 1 3360.6 1785.6 V1844.3 Z" fill="url(#gg)"/><text x="3329.0857142857144" y="1730.0671428571427" font-size="25" fill="#777" text-anchor="middle" font-weight="normal" dominant-baseline="central" >83</text><path d="M3372.9 1844.3 V1807.3 A31.5 31.5 0 0 1 3435.9 1807.3 V1844.3 Z" fill="url(#gr)"/><text x="3404.385714285714" y="1751.81" font-size="25" fill="#777" text-anchor="middle" font-weight="normal" dominant-baseline="central" >63</text><text x="3329.5714285714284" y="1869" font-size="25" fill="#999" text-anchor="middle" font-weight="normal" dominant-baseline="central" >细集料(砂、石屑)</text><path d="M3442.9 1844.3 A31.5 3.3 0 0 1 3505.9 1844.3 Z" fill="url(#gb)"/><text x="3474.357142857143" y="1817.0385714285715" font-size="25" fill="#777" text-anchor="middle" font-weight="normal" dominant-baseline="central" >3</text><text x="3549.6571428571433" y="1820.3" font-size="25" fill="#777" text-anchor="middle" font-weight="normal" dominant-baseline="central" >0</text><text x="3624.957142857143" y="1820.3" font-size="25" fill="#777" text-anchor="middle" font-weight="normal" dominant-baseline="central" >0</text><text x="3550.1428571428573" y="1869" font-size="25" fill="#999" text-anchor="middle" font-weight="normal" dominant-baseline="central" >土工合成材料</text><path d="M3663.4 1844.3 A31.5 16.3 0 0 1 3726.4 1844.3 Z" fill="url(#gb)"/><text x="3694.9285714285716" y="1803.992857142857" font-size="25" fill="#777" text-anchor="middle" font-weight="normal" dominant-baseline="central" >15</text><text x="3770.2285714285717" y="1820.3" font-size="25" fill="#777" text-anchor="middle" font-weight="normal" dominant-baseline="central" >0</text><path d="M3814.0 1844.3 A31.5 1.1 0 0 1 3877.0 1844.3 Z" fill="url(#gr)"/><text x="3845.5285714285715" y="1819.212857142857" font-size="25" fill="#777" text-anchor="middle" font-weight="normal" dominant-baseline="central" >1</text><text x="3770.714285714286" y="1869" font-size="25" fill="#999" text-anchor="middle" font-weight="normal" dominant-baseline="central" >其他材料</text><line x1="2337" y1="1845.8" x2="3881" y2="1845.8" stroke="#cfcfcf" stroke-width="3"/><line x1="2337.0" y1="1844.3" x2="2337.0" y2="1853.3" stroke="#cfcfcf" stroke-width="2"/><line x1="2557.6" y1="1844.3" x2="2557.6" y2="1853.3" stroke="#cfcfcf" stroke-width="2"/><line x1="2778.1" y1="1844.3" x2="2778.1" y2="1853.3" stroke="#cfcfcf" stroke-width="2"/><line x1="2998.7" y1="1844.3" x2="2998.7" y2="1853.3" stroke="#cfcfcf" stroke-width="2"/><line x1="3219.3" y1="1844.3" x2="3219.3" y2="1853.3" stroke="#cfcfcf" stroke-width="2"/><line x1="3439.9" y1="1844.3" x2="3439.9" y2="1853.3" stroke="#cfcfcf" stroke-width="2"/><line x1="3660.4" y1="1844.3" x2="3660.4" y2="1853.3" stroke="#cfcfcf" stroke-width="2"/><line x1="3881.0" y1="1844.3" x2="3881.0" y2="1853.3" stroke="#cfcfcf" stroke-width="2"/></svg>
</body></html>
